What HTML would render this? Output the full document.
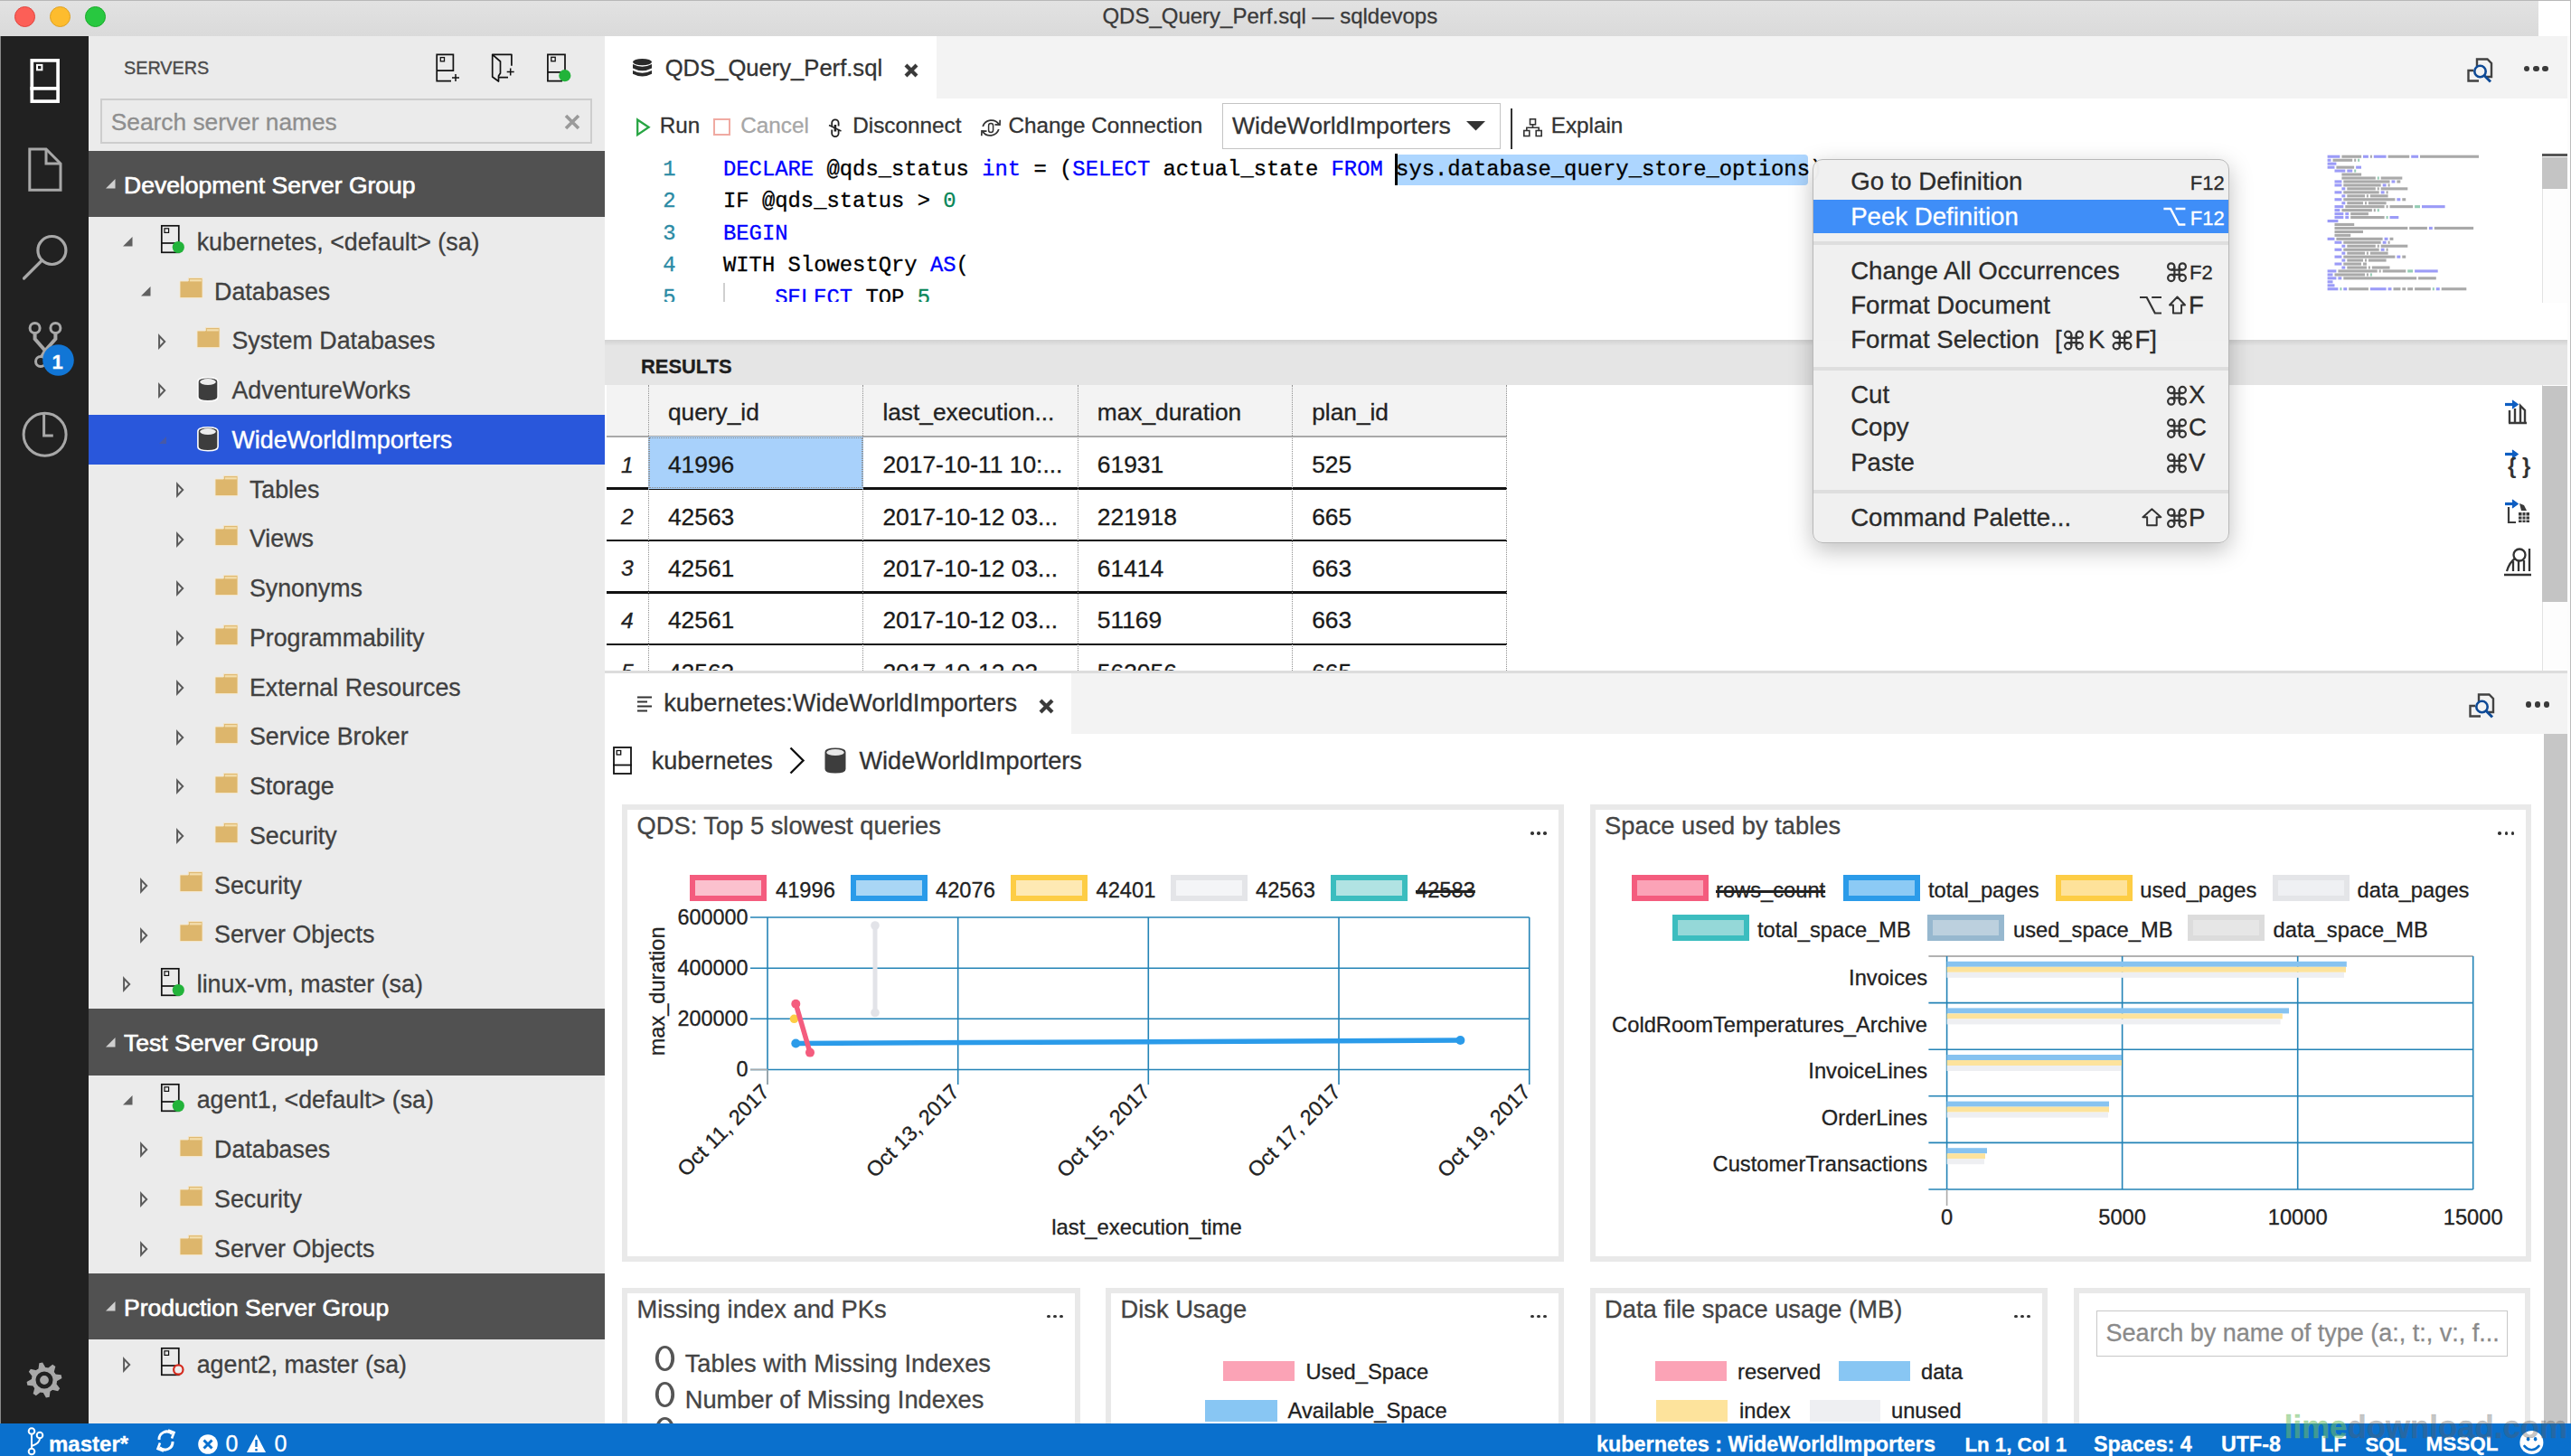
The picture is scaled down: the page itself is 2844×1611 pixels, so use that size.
<!DOCTYPE html>
<html><head><meta charset="utf-8">
<style>
*{margin:0;padding:0;box-sizing:border-box}
html,body{width:2844px;height:1611px;overflow:hidden;background:#fff;font-family:"Liberation Sans",sans-serif;color:#333}
.a{position:absolute}
.t{position:absolute;white-space:nowrap;line-height:1;-webkit-text-stroke-width:0.3px}
.mono{font-family:"Liberation Mono",monospace}
svg{position:absolute;overflow:visible}
</style></head><body>
<div class="a" style="left:0.00px;top:0.00px;width:2844.00px;height:40.00px;background:linear-gradient(#e2e2e2,#dadada);border-top:1px solid #b8b8b8"></div>
<div class="a" style="left:2808.00px;top:1.00px;width:35.00px;height:41.00px;background:#fff;"></div>
<div class="a" style="left:15.90px;top:7.00px;width:23.00px;height:23.00px;background:#fc5f57;border-radius:50%;border:1px solid #e0443e"></div>
<div class="a" style="left:54.80px;top:7.00px;width:23.00px;height:23.00px;background:#fdbc2e;border-radius:50%;border:1px solid #dea123"></div>
<div class="a" style="left:93.80px;top:7.00px;width:23.00px;height:23.00px;background:#28c840;border-radius:50%;border:1px solid #1aab29"></div>
<div class="t" style="left:1219.40px;top:6.08px;font-size:24px;color:#3a3a3a;font-weight:normal;font-family:'Liberation Sans';">QDS_Query_Perf.sql — sqldevops</div>
<div class="a" style="left:0.00px;top:40.00px;width:98.00px;height:1535.00px;background:#212121;border-left:1px solid #8a8a8a"></div>
<div class="a" style="left:98.00px;top:40.00px;width:571.00px;height:1535.00px;background:#ebebeb;"></div>
<div class="a" style="left:669.00px;top:40.00px;width:2171.00px;height:69.00px;background:#f3f3f3;"></div>
<div class="a" style="left:669.00px;top:40.00px;width:367.00px;height:69.00px;background:#fff;"></div>
<div class="a" style="left:669.00px;top:109.00px;width:2171.00px;height:267.00px;background:#fff;"></div>
<div class="a" style="left:669.00px;top:376.00px;width:2171.00px;height:6.00px;background:linear-gradient(#d2d2d2,#e2e2e2);"></div>
<div class="a" style="left:669.00px;top:382.00px;width:2171.00px;height:44.00px;background:#e5e5e5;"></div>
<div class="a" style="left:669.00px;top:426.00px;width:2143.00px;height:316.00px;background:#fff;"></div>
<div class="a" style="left:669.00px;top:742.00px;width:2171.00px;height:3.00px;background:#dcdcdc;"></div>
<div class="a" style="left:669.00px;top:745.00px;width:2171.00px;height:67.00px;background:#f3f3f3;"></div>
<div class="a" style="left:669.00px;top:745.00px;width:516.00px;height:67.00px;background:#fff;"></div>
<div class="a" style="left:669.00px;top:812.00px;width:2145.00px;height:763.00px;background:#fff;"></div>
<div class="a" style="left:2814.00px;top:812.00px;width:26.00px;height:763.00px;background:#c6c6c6;"></div>
<div class="a" style="left:2840.00px;top:40.00px;width:3.00px;height:1535.00px;background:#fcfcfc;"></div>
<div class="a" style="left:2843.00px;top:0.00px;width:1.00px;height:1611.00px;background:#bdbdbd;"></div>
<svg style="left:0.00px;top:0.00px;" width="98" height="130" viewBox="0 0 98 130"><rect x="35.3" y="66.9" width="28.8" height="45.2" fill="none" stroke="#fff" stroke-width="3.7"/><line x1="33.4" y1="97.9" x2="65.9" y2="97.9" stroke="#fff" stroke-width="3.7"/><rect x="41" y="71.9" width="5.4" height="5.4" fill="none" stroke="#fff" stroke-width="2"/></svg>
<svg style="left:0.00px;top:0.00px;" width="98" height="230" viewBox="0 0 98 230"><path d="M32.8 165 H51 L67 181 V210.3 H32.8 Z" fill="none" stroke="#a8a8a8" stroke-width="3"/><path d="M51 165 V181 H67" fill="none" stroke="#a8a8a8" stroke-width="3"/></svg>
<svg style="left:0.00px;top:0.00px;" width="98" height="330" viewBox="0 0 98 330"><circle cx="57.4" cy="277" r="15.5" fill="none" stroke="#a8a8a8" stroke-width="3.2"/><line x1="46.5" y1="288" x2="26.5" y2="308" stroke="#a8a8a8" stroke-width="3.2" stroke-linecap="round"/></svg>
<svg style="left:0.00px;top:0.00px;" width="98" height="430" viewBox="0 0 98 430"><circle cx="38.6" cy="363" r="5.5" fill="none" stroke="#a8a8a8" stroke-width="3"/><circle cx="61.4" cy="363" r="5.5" fill="none" stroke="#a8a8a8" stroke-width="3"/><circle cx="45" cy="400" r="5.5" fill="none" stroke="#a8a8a8" stroke-width="3"/><path d="M38.6 368.5 V375 L50 388 L61.4 375 V368.5" fill="none" stroke="#a8a8a8" stroke-width="4"/><line x1="50" y1="388" x2="46" y2="395" stroke="#a8a8a8" stroke-width="4"/><circle cx="64.5" cy="398.5" r="17.3" fill="#1176d6"/></svg>
<div class="t" style="left:57.60px;top:389.88px;font-size:22px;color:#fff;font-weight:bold;font-family:'Liberation Sans';">1</div>
<svg style="left:0.00px;top:0.00px;" width="98" height="510" viewBox="0 0 98 510"><circle cx="49.6" cy="480.7" r="23.5" fill="none" stroke="#a8a8a8" stroke-width="3"/><path d="M48.6 458.5 V482 H58.8" fill="none" stroke="#a8a8a8" stroke-width="3"/></svg>
<svg style="left:0.00px;top:0.00px;" width="98" height="1560" viewBox="0 0 98 1560"><polygon points="43.34,1508.34 47.09,1507.59 50.35,1513.27 53.01,1513.79 58.19,1509.80 61.37,1511.93 59.67,1518.25 61.17,1520.49 67.66,1521.34 68.41,1525.09 62.73,1528.35 62.21,1531.01 66.20,1536.19 64.07,1539.37 57.75,1537.67 55.51,1539.17 54.66,1545.66 50.91,1546.41 47.65,1540.73 44.99,1540.21 39.81,1544.20 36.63,1542.07 38.33,1535.75 36.83,1533.51 30.34,1532.66 29.59,1528.91 35.27,1525.65 35.79,1522.99 31.80,1517.81 33.93,1514.63 40.25,1516.33 42.49,1514.83" fill="#a8a8a8"/><circle cx="49" cy="1527" r="14" fill="#a8a8a8"/><circle cx="49" cy="1527" r="7.2" fill="none" stroke="#212121" stroke-width="4.6"/></svg>
<div class="t" style="left:137.00px;top:66.24px;font-size:19.8px;color:#4a4a4a;font-weight:normal;font-family:'Liberation Sans';-webkit-text-stroke:0.35px #4a4a4a">SERVERS</div>
<div class="a" style="left:111.00px;top:109.00px;width:544.00px;height:50.00px;background:transparent;border:2px solid #cdcdcd"></div>
<div class="t" style="left:122.80px;top:121.74px;font-size:26.3px;color:#8e8e8e;font-weight:normal;font-family:'Liberation Sans';">Search server names</div>
<svg style="left:624.00px;top:126.00px;" width="18" height="18" viewBox="0 0 18 18"><path d="M2 2 L16 16 M16 2 L2 16" stroke="#9a9a9a" stroke-width="3.6"/></svg>
<div class="a" style="left:98.00px;top:166.80px;width:571.00px;height:73.50px;background:#515151;"></div>
<svg style="left:116.50px;top:198.00px;" width="11" height="11" viewBox="0 0 11 11"><path d="M0 10.5 H10.5 V0 Z" fill="#cfcfcf"/></svg>
<div class="t" style="left:137.00px;top:191.57px;font-size:26.5px;color:#ffffff;font-weight:normal;font-family:'Liberation Sans';-webkit-text-stroke:0.7px #fff">Development Server Group</div>
<svg style="left:136.20px;top:262.18px;" width="11" height="11" viewBox="0 0 11 11"><path d="M0 10.5 H10.5 V0 Z" fill="#606060"/></svg>
<svg style="left:178.40px;top:249.30px;" width="26" height="32" viewBox="0 0 26 32"><rect x="0.8" y="0.8" width="19" height="29.5" fill="none" stroke="#111" stroke-width="1.7"/><line x1="0" y1="20" x2="20" y2="20" stroke="#111" stroke-width="1.7"/><rect x="4" y="3.8" width="4.6" height="4.6" fill="none" stroke="#111" stroke-width="1.2"/><circle cx="19.3" cy="24.5" r="6.6" fill="#22b33a"/></svg>
<div class="t" style="left:217.70px;top:254.81px;font-size:26.8px;color:#404040;font-weight:normal;font-family:'Liberation Sans';">kubernetes, &lt;default&gt; (sa)</div>
<svg style="left:155.80px;top:316.93px;" width="11" height="11" viewBox="0 0 11 11"><path d="M0 10.5 H10.5 V0 Z" fill="#606060"/></svg>
<svg style="left:199.00px;top:307.25px;" width="26" height="24" viewBox="0 0 26 24"><path d="M9.3 0.6 H25 V22.6 H0 V4 H9.3 Z" fill="#ddb66c" stroke="#f6ead0" stroke-width="0.9"/><rect x="10.8" y="2.2" width="13" height="2.2" fill="#f4dfae"/></svg>
<div class="t" style="left:237.10px;top:309.56px;font-size:26.8px;color:#404040;font-weight:normal;font-family:'Liberation Sans';">Databases</div>
<svg style="left:174.90px;top:369.68px;" width="9" height="16" viewBox="0 0 9 16"><path d="M1.1 1.6 L7.2 8 L1.1 14.4 Z" fill="none" stroke="#5a5a5a" stroke-width="2" stroke-linejoin="miter"/></svg>
<svg style="left:218.40px;top:362.00px;" width="26" height="24" viewBox="0 0 26 24"><path d="M9.3 0.6 H25 V22.6 H0 V4 H9.3 Z" fill="#ddb66c" stroke="#f6ead0" stroke-width="0.9"/><rect x="10.8" y="2.2" width="13" height="2.2" fill="#f4dfae"/></svg>
<div class="t" style="left:256.50px;top:364.31px;font-size:26.8px;color:#404040;font-weight:normal;font-family:'Liberation Sans';">System Databases</div>
<svg style="left:174.90px;top:424.43px;" width="9" height="16" viewBox="0 0 9 16"><path d="M1.1 1.6 L7.2 8 L1.1 14.4 Z" fill="none" stroke="#5a5a5a" stroke-width="2" stroke-linejoin="miter"/></svg>
<svg style="left:218.20px;top:417.15px;" width="25" height="28" viewBox="0 0 25 28"><path d="M0.9 5.2 Q0.9 0.8 12 0.8 Q23.1 0.8 23.1 5.2 V22.3 Q23.1 26.7 12 26.7 Q0.9 26.7 0.9 22.3 Z" fill="#3d3d3d" stroke="#fff" stroke-width="1.6"/><ellipse cx="12" cy="5.6" rx="8.9" ry="3.5" fill="#ececec"/></svg>
<div class="t" style="left:256.50px;top:419.06px;font-size:26.8px;color:#404040;font-weight:normal;font-family:'Liberation Sans';">AdventureWorks</div>
<div class="a" style="left:98.00px;top:459.30px;width:571.00px;height:54.75px;background:#2957db;"></div>
<svg style="left:176.40px;top:482.68px;" width="9" height="9" viewBox="0 0 9 9"><path d="M0 8 H8 V0 Z" fill="#4d5a9a" opacity="0.8"/></svg>
<svg style="left:218.20px;top:471.90px;" width="25" height="28" viewBox="0 0 25 28"><path d="M0.9 5.2 Q0.9 0.8 12 0.8 Q23.1 0.8 23.1 5.2 V22.3 Q23.1 26.7 12 26.7 Q0.9 26.7 0.9 22.3 Z" fill="#3d3d3d" stroke="#fff" stroke-width="1.6"/><ellipse cx="12" cy="5.6" rx="8.9" ry="3.5" fill="#ececec"/></svg>
<div class="t" style="left:256.50px;top:473.81px;font-size:26.8px;color:#ffffff;font-weight:normal;font-family:'Liberation Sans';-webkit-text-stroke:0.45px #fff">WideWorldImporters</div>
<svg style="left:194.50px;top:533.92px;" width="9" height="16" viewBox="0 0 9 16"><path d="M1.1 1.6 L7.2 8 L1.1 14.4 Z" fill="none" stroke="#5a5a5a" stroke-width="2" stroke-linejoin="miter"/></svg>
<svg style="left:237.80px;top:526.25px;" width="26" height="24" viewBox="0 0 26 24"><path d="M9.3 0.6 H25 V22.6 H0 V4 H9.3 Z" fill="#ddb66c" stroke="#f6ead0" stroke-width="0.9"/><rect x="10.8" y="2.2" width="13" height="2.2" fill="#f4dfae"/></svg>
<div class="t" style="left:275.90px;top:528.56px;font-size:26.8px;color:#404040;font-weight:normal;font-family:'Liberation Sans';">Tables</div>
<svg style="left:194.50px;top:588.67px;" width="9" height="16" viewBox="0 0 9 16"><path d="M1.1 1.6 L7.2 8 L1.1 14.4 Z" fill="none" stroke="#5a5a5a" stroke-width="2" stroke-linejoin="miter"/></svg>
<svg style="left:237.80px;top:581.00px;" width="26" height="24" viewBox="0 0 26 24"><path d="M9.3 0.6 H25 V22.6 H0 V4 H9.3 Z" fill="#ddb66c" stroke="#f6ead0" stroke-width="0.9"/><rect x="10.8" y="2.2" width="13" height="2.2" fill="#f4dfae"/></svg>
<div class="t" style="left:275.90px;top:583.31px;font-size:26.8px;color:#404040;font-weight:normal;font-family:'Liberation Sans';">Views</div>
<svg style="left:194.50px;top:643.42px;" width="9" height="16" viewBox="0 0 9 16"><path d="M1.1 1.6 L7.2 8 L1.1 14.4 Z" fill="none" stroke="#5a5a5a" stroke-width="2" stroke-linejoin="miter"/></svg>
<svg style="left:237.80px;top:635.75px;" width="26" height="24" viewBox="0 0 26 24"><path d="M9.3 0.6 H25 V22.6 H0 V4 H9.3 Z" fill="#ddb66c" stroke="#f6ead0" stroke-width="0.9"/><rect x="10.8" y="2.2" width="13" height="2.2" fill="#f4dfae"/></svg>
<div class="t" style="left:275.90px;top:638.06px;font-size:26.8px;color:#404040;font-weight:normal;font-family:'Liberation Sans';">Synonyms</div>
<svg style="left:194.50px;top:698.17px;" width="9" height="16" viewBox="0 0 9 16"><path d="M1.1 1.6 L7.2 8 L1.1 14.4 Z" fill="none" stroke="#5a5a5a" stroke-width="2" stroke-linejoin="miter"/></svg>
<svg style="left:237.80px;top:690.50px;" width="26" height="24" viewBox="0 0 26 24"><path d="M9.3 0.6 H25 V22.6 H0 V4 H9.3 Z" fill="#ddb66c" stroke="#f6ead0" stroke-width="0.9"/><rect x="10.8" y="2.2" width="13" height="2.2" fill="#f4dfae"/></svg>
<div class="t" style="left:275.90px;top:692.81px;font-size:26.8px;color:#404040;font-weight:normal;font-family:'Liberation Sans';">Programmability</div>
<svg style="left:194.50px;top:752.92px;" width="9" height="16" viewBox="0 0 9 16"><path d="M1.1 1.6 L7.2 8 L1.1 14.4 Z" fill="none" stroke="#5a5a5a" stroke-width="2" stroke-linejoin="miter"/></svg>
<svg style="left:237.80px;top:745.25px;" width="26" height="24" viewBox="0 0 26 24"><path d="M9.3 0.6 H25 V22.6 H0 V4 H9.3 Z" fill="#ddb66c" stroke="#f6ead0" stroke-width="0.9"/><rect x="10.8" y="2.2" width="13" height="2.2" fill="#f4dfae"/></svg>
<div class="t" style="left:275.90px;top:747.56px;font-size:26.8px;color:#404040;font-weight:normal;font-family:'Liberation Sans';">External Resources</div>
<svg style="left:194.50px;top:807.67px;" width="9" height="16" viewBox="0 0 9 16"><path d="M1.1 1.6 L7.2 8 L1.1 14.4 Z" fill="none" stroke="#5a5a5a" stroke-width="2" stroke-linejoin="miter"/></svg>
<svg style="left:237.80px;top:800.00px;" width="26" height="24" viewBox="0 0 26 24"><path d="M9.3 0.6 H25 V22.6 H0 V4 H9.3 Z" fill="#ddb66c" stroke="#f6ead0" stroke-width="0.9"/><rect x="10.8" y="2.2" width="13" height="2.2" fill="#f4dfae"/></svg>
<div class="t" style="left:275.90px;top:802.31px;font-size:26.8px;color:#404040;font-weight:normal;font-family:'Liberation Sans';">Service Broker</div>
<svg style="left:194.50px;top:862.42px;" width="9" height="16" viewBox="0 0 9 16"><path d="M1.1 1.6 L7.2 8 L1.1 14.4 Z" fill="none" stroke="#5a5a5a" stroke-width="2" stroke-linejoin="miter"/></svg>
<svg style="left:237.80px;top:854.75px;" width="26" height="24" viewBox="0 0 26 24"><path d="M9.3 0.6 H25 V22.6 H0 V4 H9.3 Z" fill="#ddb66c" stroke="#f6ead0" stroke-width="0.9"/><rect x="10.8" y="2.2" width="13" height="2.2" fill="#f4dfae"/></svg>
<div class="t" style="left:275.90px;top:857.06px;font-size:26.8px;color:#404040;font-weight:normal;font-family:'Liberation Sans';">Storage</div>
<svg style="left:194.50px;top:917.17px;" width="9" height="16" viewBox="0 0 9 16"><path d="M1.1 1.6 L7.2 8 L1.1 14.4 Z" fill="none" stroke="#5a5a5a" stroke-width="2" stroke-linejoin="miter"/></svg>
<svg style="left:237.80px;top:909.50px;" width="26" height="24" viewBox="0 0 26 24"><path d="M9.3 0.6 H25 V22.6 H0 V4 H9.3 Z" fill="#ddb66c" stroke="#f6ead0" stroke-width="0.9"/><rect x="10.8" y="2.2" width="13" height="2.2" fill="#f4dfae"/></svg>
<div class="t" style="left:275.90px;top:911.81px;font-size:26.8px;color:#404040;font-weight:normal;font-family:'Liberation Sans';">Security</div>
<svg style="left:155.30px;top:971.92px;" width="9" height="16" viewBox="0 0 9 16"><path d="M1.1 1.6 L7.2 8 L1.1 14.4 Z" fill="none" stroke="#5a5a5a" stroke-width="2" stroke-linejoin="miter"/></svg>
<svg style="left:199.00px;top:964.25px;" width="26" height="24" viewBox="0 0 26 24"><path d="M9.3 0.6 H25 V22.6 H0 V4 H9.3 Z" fill="#ddb66c" stroke="#f6ead0" stroke-width="0.9"/><rect x="10.8" y="2.2" width="13" height="2.2" fill="#f4dfae"/></svg>
<div class="t" style="left:237.10px;top:966.56px;font-size:26.8px;color:#404040;font-weight:normal;font-family:'Liberation Sans';">Security</div>
<svg style="left:155.30px;top:1026.67px;" width="9" height="16" viewBox="0 0 9 16"><path d="M1.1 1.6 L7.2 8 L1.1 14.4 Z" fill="none" stroke="#5a5a5a" stroke-width="2" stroke-linejoin="miter"/></svg>
<svg style="left:199.00px;top:1019.00px;" width="26" height="24" viewBox="0 0 26 24"><path d="M9.3 0.6 H25 V22.6 H0 V4 H9.3 Z" fill="#ddb66c" stroke="#f6ead0" stroke-width="0.9"/><rect x="10.8" y="2.2" width="13" height="2.2" fill="#f4dfae"/></svg>
<div class="t" style="left:237.10px;top:1021.31px;font-size:26.8px;color:#404040;font-weight:normal;font-family:'Liberation Sans';">Server Objects</div>
<svg style="left:135.70px;top:1081.42px;" width="9" height="16" viewBox="0 0 9 16"><path d="M1.1 1.6 L7.2 8 L1.1 14.4 Z" fill="none" stroke="#5a5a5a" stroke-width="2" stroke-linejoin="miter"/></svg>
<svg style="left:178.40px;top:1070.55px;" width="26" height="32" viewBox="0 0 26 32"><rect x="0.8" y="0.8" width="19" height="29.5" fill="none" stroke="#111" stroke-width="1.7"/><line x1="0" y1="20" x2="20" y2="20" stroke="#111" stroke-width="1.7"/><rect x="4" y="3.8" width="4.6" height="4.6" fill="none" stroke="#111" stroke-width="1.2"/><circle cx="19.3" cy="24.5" r="6.6" fill="#22b33a"/></svg>
<div class="t" style="left:217.70px;top:1076.06px;font-size:26.8px;color:#404040;font-weight:normal;font-family:'Liberation Sans';">linux-vm, master (sa)</div>
<div class="a" style="left:98.00px;top:1116.30px;width:571.00px;height:73.50px;background:#515151;"></div>
<svg style="left:116.50px;top:1147.50px;" width="11" height="11" viewBox="0 0 11 11"><path d="M0 10.5 H10.5 V0 Z" fill="#cfcfcf"/></svg>
<div class="t" style="left:137.00px;top:1141.07px;font-size:26.5px;color:#ffffff;font-weight:normal;font-family:'Liberation Sans';-webkit-text-stroke:0.7px #fff">Test Server Group</div>
<svg style="left:136.20px;top:1211.67px;" width="11" height="11" viewBox="0 0 11 11"><path d="M0 10.5 H10.5 V0 Z" fill="#606060"/></svg>
<svg style="left:178.40px;top:1198.80px;" width="26" height="32" viewBox="0 0 26 32"><rect x="0.8" y="0.8" width="19" height="29.5" fill="none" stroke="#111" stroke-width="1.7"/><line x1="0" y1="20" x2="20" y2="20" stroke="#111" stroke-width="1.7"/><rect x="4" y="3.8" width="4.6" height="4.6" fill="none" stroke="#111" stroke-width="1.2"/><circle cx="19.3" cy="24.5" r="6.6" fill="#22b33a"/></svg>
<div class="t" style="left:217.70px;top:1204.31px;font-size:26.8px;color:#404040;font-weight:normal;font-family:'Liberation Sans';">agent1, &lt;default&gt; (sa)</div>
<svg style="left:155.30px;top:1264.42px;" width="9" height="16" viewBox="0 0 9 16"><path d="M1.1 1.6 L7.2 8 L1.1 14.4 Z" fill="none" stroke="#5a5a5a" stroke-width="2" stroke-linejoin="miter"/></svg>
<svg style="left:199.00px;top:1256.75px;" width="26" height="24" viewBox="0 0 26 24"><path d="M9.3 0.6 H25 V22.6 H0 V4 H9.3 Z" fill="#ddb66c" stroke="#f6ead0" stroke-width="0.9"/><rect x="10.8" y="2.2" width="13" height="2.2" fill="#f4dfae"/></svg>
<div class="t" style="left:237.10px;top:1259.06px;font-size:26.8px;color:#404040;font-weight:normal;font-family:'Liberation Sans';">Databases</div>
<svg style="left:155.30px;top:1319.17px;" width="9" height="16" viewBox="0 0 9 16"><path d="M1.1 1.6 L7.2 8 L1.1 14.4 Z" fill="none" stroke="#5a5a5a" stroke-width="2" stroke-linejoin="miter"/></svg>
<svg style="left:199.00px;top:1311.50px;" width="26" height="24" viewBox="0 0 26 24"><path d="M9.3 0.6 H25 V22.6 H0 V4 H9.3 Z" fill="#ddb66c" stroke="#f6ead0" stroke-width="0.9"/><rect x="10.8" y="2.2" width="13" height="2.2" fill="#f4dfae"/></svg>
<div class="t" style="left:237.10px;top:1313.81px;font-size:26.8px;color:#404040;font-weight:normal;font-family:'Liberation Sans';">Security</div>
<svg style="left:155.30px;top:1373.92px;" width="9" height="16" viewBox="0 0 9 16"><path d="M1.1 1.6 L7.2 8 L1.1 14.4 Z" fill="none" stroke="#5a5a5a" stroke-width="2" stroke-linejoin="miter"/></svg>
<svg style="left:199.00px;top:1366.25px;" width="26" height="24" viewBox="0 0 26 24"><path d="M9.3 0.6 H25 V22.6 H0 V4 H9.3 Z" fill="#ddb66c" stroke="#f6ead0" stroke-width="0.9"/><rect x="10.8" y="2.2" width="13" height="2.2" fill="#f4dfae"/></svg>
<div class="t" style="left:237.10px;top:1368.56px;font-size:26.8px;color:#404040;font-weight:normal;font-family:'Liberation Sans';">Server Objects</div>
<div class="a" style="left:98.00px;top:1408.80px;width:571.00px;height:73.50px;background:#515151;"></div>
<svg style="left:116.50px;top:1440.00px;" width="11" height="11" viewBox="0 0 11 11"><path d="M0 10.5 H10.5 V0 Z" fill="#cfcfcf"/></svg>
<div class="t" style="left:137.00px;top:1433.57px;font-size:26.5px;color:#ffffff;font-weight:normal;font-family:'Liberation Sans';-webkit-text-stroke:0.7px #fff">Production Server Group</div>
<svg style="left:135.70px;top:1502.17px;" width="9" height="16" viewBox="0 0 9 16"><path d="M1.1 1.6 L7.2 8 L1.1 14.4 Z" fill="none" stroke="#5a5a5a" stroke-width="2" stroke-linejoin="miter"/></svg>
<svg style="left:178.40px;top:1491.30px;" width="26" height="32" viewBox="0 0 26 32"><rect x="0.8" y="0.8" width="19" height="29.5" fill="none" stroke="#111" stroke-width="1.7"/><line x1="0" y1="20" x2="20" y2="20" stroke="#111" stroke-width="1.7"/><rect x="4" y="3.8" width="4.6" height="4.6" fill="none" stroke="#111" stroke-width="1.2"/><circle cx="19.3" cy="24.5" r="5.2" fill="#eee" stroke="#d52b1e" stroke-width="2.2"/></svg>
<div class="t" style="left:217.70px;top:1496.81px;font-size:26.8px;color:#404040;font-weight:normal;font-family:'Liberation Sans';">agent2, master (sa)</div>
<svg style="left:0.00px;top:0.00px;" width="669" height="100" viewBox="0 0 669 100"><path d="M499 89.7 H483.2 V60.3 H501.4 V79 M483.2 78.1 H501.4" fill="none" stroke="#111" stroke-width="1.7"/><rect x="487.3" y="63.6" width="4.2" height="4.2" fill="none" stroke="#111" stroke-width="1.3"/><path d="M500 86 H508 M504 82 V90" stroke="#111" stroke-width="1.5"/><path d="M565.9 72.8 V60.3 H544.7 V85 L551.5 90 V84 L553.5 81 V68 L544.7 60.3 M552 85.7 H562" fill="none" stroke="#111" stroke-width="1.7" stroke-linejoin="round"/><path d="M560.7 79.6 H568.7 M564.7 75.6 V83.6" stroke="#111" stroke-width="1.5"/><path d="M625 79 V60.3 H605.9 V89.7 H622 M605.9 79.8 H622" fill="none" stroke="#111" stroke-width="1.7"/><rect x="609.8" y="63.3" width="4.4" height="4.4" fill="none" stroke="#111" stroke-width="1.3"/><circle cx="624.8" cy="83.7" r="6.6" fill="#22b33a"/></svg>
<svg style="left:699.60px;top:65.00px;" width="22" height="22" viewBox="0 0 22 22"><ellipse cx="10.5" cy="3.6" rx="10.5" ry="3.6" fill="#2a2a2a"/><path d="M0 6 Q10.5 11.5 21 6 V10.5 Q10.5 16 0 10.5 Z" fill="#2a2a2a"/><path d="M0 13 Q10.5 18.5 21 13 V16.8 Q10.5 22.3 0 16.8 Z" fill="#2a2a2a"/></svg>
<div class="t" style="left:735.70px;top:62.63px;font-size:25.6px;color:#333;font-weight:normal;font-family:'Liberation Sans';">QDS_Query_Perf.sql</div>
<svg style="left:1000.00px;top:69.60px;" width="16" height="16" viewBox="0 0 16 16"><path d="M2 2 L14 14 M14 2 L2 14" stroke="#3a3a3a" stroke-width="4.2"/></svg>
<svg style="left:2729.00px;top:63.50px;" width="28" height="28" viewBox="0 0 28 28"><path d="M11 9 V1.5 H22.5 L27 6 V21 H21" fill="none" stroke="#424242" stroke-width="2.4"/><path d="M7 14 H1.5 V25.5 H13" fill="none" stroke="#424242" stroke-width="2.4"/><circle cx="14.5" cy="15" r="6.2" fill="none" stroke="#0e4a96" stroke-width="2.6"/><line x1="19" y1="19.5" x2="26" y2="26.5" stroke="#0e4a96" stroke-width="3"/></svg>
<div class="a" style="left:2792.10px;top:72.60px;width:6.40px;height:6.40px;background:#3a3a3a;border-radius:50%"></div>
<div class="a" style="left:2802.20px;top:72.60px;width:6.40px;height:6.40px;background:#3a3a3a;border-radius:50%"></div>
<div class="a" style="left:2812.30px;top:72.60px;width:6.40px;height:6.40px;background:#3a3a3a;border-radius:50%"></div>
<svg style="left:703.50px;top:131.20px;" width="16" height="20" viewBox="0 0 16 20"><path d="M1.2 1.5 L13.6 9.8 L1.2 18.2 Z" fill="none" stroke="#27a543" stroke-width="2.3" stroke-linejoin="miter"/></svg>
<div class="t" style="left:729.70px;top:127.43px;font-size:24.3px;color:#333;font-weight:normal;font-family:'Liberation Sans';">Run</div>
<div class="a" style="left:789.00px;top:131.00px;width:19.00px;height:19.00px;background:transparent;border:2.2px solid #f0aaa2"></div>
<div class="t" style="left:819.30px;top:127.43px;font-size:24.3px;color:#a6a6a6;font-weight:normal;font-family:'Liberation Sans';">Cancel</div>
<svg style="left:916.60px;top:130.50px;" width="15" height="21" viewBox="0 0 15 21"><path d="M3.2 9 V5 A3.7 3.7 0 0 1 10.6 5 V8.5" fill="none" stroke="#222" stroke-width="1.8"/><path d="M3.2 12.5 V16.5 A3.7 3.7 0 0 0 10.6 16.5 V12.5" fill="none" stroke="#222" stroke-width="1.8"/><line x1="0" y1="7.5" x2="13.5" y2="14" stroke="#222" stroke-width="1.4"/><line x1="6.9" y1="7" x2="6.9" y2="14.5" stroke="#222" stroke-width="2.6"/></svg>
<div class="t" style="left:943.20px;top:127.43px;font-size:24.3px;color:#333;font-weight:normal;font-family:'Liberation Sans';">Disconnect</div>
<svg style="left:1084.70px;top:130.60px;" width="23" height="21" viewBox="0 0 23 21"><path d="M2.2 9 A10 10 0 0 1 20 6.5" fill="none" stroke="#333" stroke-width="1.8"/><path d="M19.8 12 A10 10 0 0 1 2 14.5" fill="none" stroke="#333" stroke-width="1.8"/><path d="M15.5 6.8 L21 7.2 L21.2 1.8" fill="none" stroke="#333" stroke-width="1.7"/><path d="M6.5 14.2 L1 13.8 L0.8 19.2" fill="none" stroke="#333" stroke-width="1.7"/><rect x="8.6" y="5.5" width="5" height="10" rx="2.5" fill="none" stroke="#333" stroke-width="1.5"/></svg>
<div class="t" style="left:1115.40px;top:127.43px;font-size:24.3px;color:#333;font-weight:normal;font-family:'Liberation Sans';">Change Connection</div>
<div class="a" style="left:1352.00px;top:114.00px;width:308.00px;height:51.00px;background:#fff;border:1.6px solid #c4c4c4"></div>
<div class="t" style="left:1363.00px;top:126.38px;font-size:26.6px;color:#333;font-weight:normal;font-family:'Liberation Sans';">WideWorldImporters</div>
<svg style="left:1622.00px;top:134.00px;" width="24" height="12" viewBox="0 0 24 12"><path d="M0 0 H21 L10.5 10.5 Z" fill="#333"/></svg>
<div class="a" style="left:1670.50px;top:120.00px;width:2.00px;height:45.00px;background:#333;"></div>
<svg style="left:1685.00px;top:131.00px;" width="22" height="21" viewBox="0 0 22 21"><rect x="7.5" y="0.8" width="6" height="6" fill="none" stroke="#333" stroke-width="1.6"/><rect x="0.8" y="13.5" width="6" height="6" fill="none" stroke="#333" stroke-width="1.6"/><rect x="14.2" y="13.5" width="6" height="6" fill="none" stroke="#333" stroke-width="1.6"/><path d="M10.5 6.8 V10.2 M3.8 13.5 V10.2 H17.2 V13.5" fill="none" stroke="#333" stroke-width="1.6"/></svg>
<div class="t" style="left:1715.70px;top:127.43px;font-size:24.3px;color:#333;font-weight:normal;font-family:'Liberation Sans';">Explain</div>
<div class="a" style="left:1544.00px;top:170.70px;width:456.00px;height:34.00px;background:#add6ff;border-radius:4px"></div>
<div class="a" style="left:669px;top:165px;width:1900px;height:169px;overflow:hidden"><div class="a" style="left:-669px;top:-165px;width:2844px;height:400px"><div class="t" style="left:747.50px;top:175.52px;font-size:23.85px;color:#2b8ba5;font-weight:normal;font-family:'Liberation Mono';transform:translateX(-100%)">1</div>
<div class="t" style="left:800.00px;top:175.52px;font-size:23.85px;color:#000;font-weight:normal;font-family:'Liberation Mono';"><span style="color:#0000ff">DECLARE</span><span style="color:#000000">&nbsp;@qds_status&nbsp;</span><span style="color:#0000ff">int</span><span style="color:#000000">&nbsp;=&nbsp;(</span><span style="color:#0000ff">SELECT</span><span style="color:#000000">&nbsp;actual_state&nbsp;</span><span style="color:#0000ff">FROM</span><span style="color:#000000">&nbsp;sys.database_query_store_options)</span></div>
<div class="t" style="left:747.50px;top:211.02px;font-size:23.85px;color:#2b8ba5;font-weight:normal;font-family:'Liberation Mono';transform:translateX(-100%)">2</div>
<div class="t" style="left:800.00px;top:211.02px;font-size:23.85px;color:#000;font-weight:normal;font-family:'Liberation Mono';"><span style="color:#000000">IF&nbsp;@qds_status&nbsp;>&nbsp;</span><span style="color:#098658">0</span></div>
<div class="t" style="left:747.50px;top:246.52px;font-size:23.85px;color:#2b8ba5;font-weight:normal;font-family:'Liberation Mono';transform:translateX(-100%)">3</div>
<div class="t" style="left:800.00px;top:246.52px;font-size:23.85px;color:#000;font-weight:normal;font-family:'Liberation Mono';"><span style="color:#0000ff">BEGIN</span></div>
<div class="t" style="left:747.50px;top:282.02px;font-size:23.85px;color:#2b8ba5;font-weight:normal;font-family:'Liberation Mono';transform:translateX(-100%)">4</div>
<div class="t" style="left:800.00px;top:282.02px;font-size:23.85px;color:#000;font-weight:normal;font-family:'Liberation Mono';"><span style="color:#000000">WITH&nbsp;SlowestQry&nbsp;</span><span style="color:#0000ff">AS</span><span style="color:#000000">(</span></div>
<div class="t" style="left:747.50px;top:317.52px;font-size:23.85px;color:#2b8ba5;font-weight:normal;font-family:'Liberation Mono';transform:translateX(-100%)">5</div>
<div class="t" style="left:800.00px;top:317.52px;font-size:23.85px;color:#000;font-weight:normal;font-family:'Liberation Mono';"><span style="color:#000000">&nbsp;&nbsp;&nbsp;&nbsp;</span><span style="color:#0000ff">SELECT</span><span style="color:#000000">&nbsp;TOP&nbsp;</span><span style="color:#098658">5</span></div><div class="a" style="left:800.00px;top:313.00px;width:1.50px;height:25.00px;background:#d0d0d0;"></div></div></div>
<div class="a" style="left:1543.00px;top:170.00px;width:3.00px;height:35.00px;background:#000;"></div>
<svg style="left:2560.00px;top:160.00px;opacity:0.5" width="200" height="170" viewBox="0 0 200 170"><rect x="14.6" y="11.7" width="13.8" height="3.1" fill="#3a3af0"/><rect x="30.4" y="11.7" width="21.7" height="3.1" fill="#555555"/><rect x="54.0" y="11.7" width="5.9" height="3.1" fill="#3a3af0"/><rect x="61.9" y="11.7" width="2.0" height="3.1" fill="#555555"/><rect x="65.8" y="11.7" width="13.8" height="3.1" fill="#3a3af0"/><rect x="81.6" y="11.7" width="23.6" height="3.1" fill="#555555"/><rect x="107.2" y="11.7" width="7.9" height="3.1" fill="#3a3af0"/><rect x="117.0" y="11.7" width="65.0" height="3.1" fill="#555555"/><rect x="14.6" y="15.7" width="3.9" height="3.1" fill="#3a3af0"/><rect x="20.5" y="15.7" width="21.7" height="3.1" fill="#555555"/><rect x="44.2" y="15.7" width="2.0" height="3.1" fill="#555555"/><rect x="48.1" y="15.7" width="2.0" height="3.1" fill="#2c9a6a"/><rect x="14.6" y="19.6" width="9.8" height="3.1" fill="#3a3af0"/><rect x="14.6" y="23.6" width="7.9" height="3.1" fill="#3a3af0"/><rect x="24.4" y="23.6" width="19.7" height="3.1" fill="#555555"/><rect x="46.1" y="23.6" width="5.9" height="3.1" fill="#3a3af0"/><rect x="22.5" y="27.5" width="11.8" height="3.1" fill="#3a3af0"/><rect x="36.3" y="27.5" width="5.9" height="3.1" fill="#3a3af0"/><rect x="44.2" y="27.5" width="2.0" height="3.1" fill="#2c9a6a"/><rect x="30.4" y="31.5" width="21.7" height="3.1" fill="#555555"/><rect x="30.4" y="35.5" width="37.4" height="3.1" fill="#555555"/><rect x="69.8" y="35.5" width="2.0" height="3.1" fill="#2c9a6a"/><rect x="73.7" y="35.5" width="23.6" height="3.1" fill="#555555"/><rect x="22.5" y="39.4" width="7.9" height="3.1" fill="#3a3af0"/><rect x="32.3" y="39.4" width="51.2" height="3.1" fill="#555555"/><rect x="85.5" y="39.4" width="3.9" height="3.1" fill="#3a3af0"/><rect x="91.4" y="39.4" width="3.9" height="3.1" fill="#555555"/><rect x="22.5" y="43.4" width="7.9" height="3.1" fill="#3a3af0"/><rect x="32.3" y="43.4" width="41.4" height="3.1" fill="#555555"/><rect x="75.7" y="43.4" width="3.9" height="3.1" fill="#3a3af0"/><rect x="81.6" y="43.4" width="2.0" height="3.1" fill="#555555"/><rect x="30.4" y="47.3" width="3.9" height="3.1" fill="#3a3af0"/><rect x="36.3" y="47.3" width="31.5" height="3.1" fill="#555555"/><rect x="69.8" y="47.3" width="2.0" height="3.1" fill="#555555"/><rect x="73.7" y="47.3" width="29.6" height="3.1" fill="#555555"/><rect x="22.5" y="51.3" width="7.9" height="3.1" fill="#3a3af0"/><rect x="32.3" y="51.3" width="39.4" height="3.1" fill="#555555"/><rect x="73.7" y="51.3" width="3.9" height="3.1" fill="#3a3af0"/><rect x="79.6" y="51.3" width="2.0" height="3.1" fill="#555555"/><rect x="30.4" y="55.3" width="3.9" height="3.1" fill="#3a3af0"/><rect x="36.3" y="55.3" width="19.7" height="3.1" fill="#555555"/><rect x="57.9" y="55.3" width="2.0" height="3.1" fill="#555555"/><rect x="61.9" y="55.3" width="19.7" height="3.1" fill="#555555"/><rect x="22.5" y="59.2" width="7.9" height="3.1" fill="#3a3af0"/><rect x="32.3" y="59.2" width="57.1" height="3.1" fill="#555555"/><rect x="91.4" y="59.2" width="3.9" height="3.1" fill="#3a3af0"/><rect x="97.3" y="59.2" width="3.9" height="3.1" fill="#555555"/><rect x="30.4" y="63.2" width="3.9" height="3.1" fill="#3a3af0"/><rect x="36.3" y="63.2" width="17.7" height="3.1" fill="#555555"/><rect x="56.0" y="63.2" width="2.0" height="3.1" fill="#555555"/><rect x="59.9" y="63.2" width="19.7" height="3.1" fill="#555555"/><rect x="22.5" y="67.1" width="9.8" height="3.1" fill="#3a3af0"/><rect x="34.3" y="67.1" width="43.3" height="3.1" fill="#555555"/><rect x="79.6" y="67.1" width="2.0" height="3.1" fill="#555555"/><rect x="83.5" y="67.1" width="25.6" height="3.1" fill="#555555"/><rect x="111.1" y="67.1" width="5.9" height="3.1" fill="#2c9a6a"/><rect x="119.0" y="67.1" width="25.6" height="3.1" fill="#3a3af0"/><rect x="22.5" y="71.1" width="5.9" height="3.1" fill="#3a3af0"/><rect x="30.4" y="71.1" width="33.5" height="3.1" fill="#555555"/><rect x="65.8" y="71.1" width="2.0" height="3.1" fill="#555555"/><rect x="69.8" y="71.1" width="2.0" height="3.1" fill="#2c9a6a"/><rect x="22.5" y="75.1" width="9.8" height="3.1" fill="#3a3af0"/><rect x="34.3" y="75.1" width="3.9" height="3.1" fill="#3a3af0"/><rect x="40.2" y="75.1" width="19.7" height="3.1" fill="#555555"/><rect x="22.5" y="79.0" width="9.8" height="3.1" fill="#3a3af0"/><rect x="34.3" y="79.0" width="3.9" height="3.1" fill="#3a3af0"/><rect x="40.2" y="79.0" width="37.4" height="3.1" fill="#555555"/><rect x="79.6" y="79.0" width="2.0" height="3.1" fill="#2c9a6a"/><rect x="83.5" y="79.0" width="9.8" height="3.1" fill="#3a3af0"/><rect x="14.6" y="83.0" width="11.8" height="3.1" fill="#3a3af0"/><rect x="22.5" y="86.9" width="21.7" height="3.1" fill="#555555"/><rect x="22.5" y="90.9" width="80.8" height="3.1" fill="#555555"/><rect x="105.2" y="90.9" width="19.7" height="3.1" fill="#555555"/><rect x="126.9" y="90.9" width="3.9" height="3.1" fill="#3a3af0"/><rect x="132.8" y="90.9" width="43.3" height="3.1" fill="#555555"/><rect x="22.5" y="94.9" width="31.5" height="3.1" fill="#555555"/><rect x="22.5" y="98.8" width="17.7" height="3.1" fill="#555555"/><rect x="14.6" y="102.8" width="7.9" height="3.1" fill="#3a3af0"/><rect x="24.4" y="102.8" width="51.2" height="3.1" fill="#555555"/><rect x="77.6" y="102.8" width="3.9" height="3.1" fill="#3a3af0"/><rect x="83.5" y="102.8" width="3.9" height="3.1" fill="#555555"/><rect x="22.5" y="106.7" width="7.9" height="3.1" fill="#3a3af0"/><rect x="32.3" y="106.7" width="41.4" height="3.1" fill="#555555"/><rect x="75.7" y="106.7" width="3.9" height="3.1" fill="#3a3af0"/><rect x="81.6" y="106.7" width="2.0" height="3.1" fill="#555555"/><rect x="30.4" y="110.7" width="3.9" height="3.1" fill="#3a3af0"/><rect x="36.3" y="110.7" width="31.5" height="3.1" fill="#555555"/><rect x="69.8" y="110.7" width="2.0" height="3.1" fill="#555555"/><rect x="73.7" y="110.7" width="29.6" height="3.1" fill="#555555"/><rect x="22.5" y="114.7" width="7.9" height="3.1" fill="#3a3af0"/><rect x="32.3" y="114.7" width="39.4" height="3.1" fill="#555555"/><rect x="73.7" y="114.7" width="3.9" height="3.1" fill="#3a3af0"/><rect x="79.6" y="114.7" width="2.0" height="3.1" fill="#555555"/><rect x="30.4" y="118.6" width="3.9" height="3.1" fill="#3a3af0"/><rect x="36.3" y="118.6" width="19.7" height="3.1" fill="#555555"/><rect x="57.9" y="118.6" width="2.0" height="3.1" fill="#555555"/><rect x="61.9" y="118.6" width="19.7" height="3.1" fill="#555555"/><rect x="22.5" y="122.6" width="7.9" height="3.1" fill="#3a3af0"/><rect x="32.3" y="122.6" width="57.1" height="3.1" fill="#555555"/><rect x="91.4" y="122.6" width="3.9" height="3.1" fill="#3a3af0"/><rect x="97.3" y="122.6" width="3.9" height="3.1" fill="#555555"/><rect x="30.4" y="126.5" width="3.9" height="3.1" fill="#3a3af0"/><rect x="36.3" y="126.5" width="17.7" height="3.1" fill="#555555"/><rect x="56.0" y="126.5" width="2.0" height="3.1" fill="#555555"/><rect x="59.9" y="126.5" width="19.7" height="3.1" fill="#555555"/><rect x="22.5" y="130.5" width="7.9" height="3.1" fill="#3a3af0"/><rect x="32.3" y="130.5" width="19.7" height="3.1" fill="#555555"/><rect x="54.0" y="130.5" width="3.9" height="3.1" fill="#555555"/><rect x="30.4" y="134.5" width="3.9" height="3.1" fill="#3a3af0"/><rect x="36.3" y="134.5" width="21.7" height="3.1" fill="#555555"/><rect x="59.9" y="134.5" width="2.0" height="3.1" fill="#555555"/><rect x="63.8" y="134.5" width="19.7" height="3.1" fill="#555555"/><rect x="14.6" y="138.4" width="9.8" height="3.1" fill="#3a3af0"/><rect x="26.4" y="138.4" width="43.3" height="3.1" fill="#555555"/><rect x="71.7" y="138.4" width="2.0" height="3.1" fill="#555555"/><rect x="75.7" y="138.4" width="25.6" height="3.1" fill="#555555"/><rect x="103.2" y="138.4" width="5.9" height="3.1" fill="#2c9a6a"/><rect x="111.1" y="138.4" width="25.6" height="3.1" fill="#3a3af0"/><rect x="14.6" y="142.4" width="5.9" height="3.1" fill="#3a3af0"/><rect x="22.5" y="142.4" width="33.5" height="3.1" fill="#555555"/><rect x="57.9" y="142.4" width="2.0" height="3.1" fill="#555555"/><rect x="61.9" y="142.4" width="2.0" height="3.1" fill="#2c9a6a"/><rect x="14.6" y="146.3" width="9.8" height="3.1" fill="#3a3af0"/><rect x="26.4" y="146.3" width="3.9" height="3.1" fill="#3a3af0"/><rect x="32.3" y="146.3" width="80.8" height="3.1" fill="#555555"/><rect x="115.1" y="146.3" width="19.7" height="3.1" fill="#555555"/><rect x="14.6" y="150.3" width="5.9" height="3.1" fill="#3a3af0"/><rect x="14.6" y="154.3" width="7.9" height="3.1" fill="#3a3af0"/><rect x="14.6" y="158.2" width="11.8" height="3.1" fill="#3a3af0"/><rect x="28.4" y="158.2" width="2.0" height="3.1" fill="#2c9a6a"/><rect x="32.3" y="158.2" width="3.9" height="3.1" fill="#3a3af0"/><rect x="38.2" y="158.2" width="21.7" height="3.1" fill="#555555"/><rect x="61.9" y="158.2" width="17.7" height="3.1" fill="#3a3af0"/><rect x="81.6" y="158.2" width="3.9" height="3.1" fill="#3a3af0"/><rect x="87.5" y="158.2" width="7.9" height="3.1" fill="#555555"/><rect x="97.3" y="158.2" width="3.9" height="3.1" fill="#555555"/><rect x="103.2" y="158.2" width="5.9" height="3.1" fill="#555555"/><rect x="111.1" y="158.2" width="17.7" height="3.1" fill="#555555"/><rect x="130.8" y="158.2" width="2.0" height="3.1" fill="#2c9a6a"/><rect x="134.8" y="158.2" width="3.9" height="3.1" fill="#3a3af0"/><rect x="140.7" y="158.2" width="27.6" height="3.1" fill="#555555"/></svg>
<div class="a" style="left:2812.00px;top:170.00px;width:28.00px;height:165.00px;background:#fdfdfd;border-left:1px solid #e2e2e2"></div>
<div class="a" style="left:2812.00px;top:169.80px;width:28.00px;height:3.70px;background:#555;"></div>
<div class="a" style="left:2812.00px;top:173.50px;width:28.00px;height:35.80px;background:#c4c4c4;"></div>
<div class="a" style="left:2004.50px;top:175.50px;width:461.50px;height:425.00px;background:rgba(240,240,240,0.98);border-radius:11px;border:1px solid #b8b8b8;box-shadow:0 8px 26px rgba(0,0,0,0.25)"></div>
<div class="a" style="left:2005.50px;top:221.20px;width:459.50px;height:37.00px;background:#3f8ef8;"></div>
<div class="a" style="left:2005.50px;top:267.00px;width:459.50px;height:4.20px;background:#dedede;"></div>
<div class="a" style="left:2005.50px;top:405.50px;width:459.50px;height:4.20px;background:#dedede;"></div>
<div class="a" style="left:2005.50px;top:541.80px;width:459.50px;height:4.20px;background:#dedede;"></div>
<div class="t" style="left:2047.20px;top:187.24px;font-size:27.6px;color:#2b2b2b;font-weight:normal;font-family:'Liberation Sans';-webkit-text-stroke:0.3px #2b2b2b">Go to Definition</div>
<div class="t" style="left:2047.20px;top:225.54px;font-size:27.6px;color:#fff;font-weight:normal;font-family:'Liberation Sans';-webkit-text-stroke:0.3px #fff">Peek Definition</div>
<div class="t" style="left:2047.20px;top:286.14px;font-size:27.6px;color:#2b2b2b;font-weight:normal;font-family:'Liberation Sans';-webkit-text-stroke:0.3px #2b2b2b">Change All Occurrences</div>
<div class="t" style="left:2047.20px;top:323.94px;font-size:27.6px;color:#2b2b2b;font-weight:normal;font-family:'Liberation Sans';-webkit-text-stroke:0.3px #2b2b2b">Format Document</div>
<div class="t" style="left:2047.20px;top:423.24px;font-size:27.6px;color:#2b2b2b;font-weight:normal;font-family:'Liberation Sans';-webkit-text-stroke:0.3px #2b2b2b">Cut</div>
<div class="t" style="left:2047.20px;top:459.44px;font-size:27.6px;color:#2b2b2b;font-weight:normal;font-family:'Liberation Sans';-webkit-text-stroke:0.3px #2b2b2b">Copy</div>
<div class="t" style="left:2047.20px;top:498.04px;font-size:27.6px;color:#2b2b2b;font-weight:normal;font-family:'Liberation Sans';-webkit-text-stroke:0.3px #2b2b2b">Paste</div>
<div class="t" style="left:2047.20px;top:558.54px;font-size:27.6px;color:#2b2b2b;font-weight:normal;font-family:'Liberation Sans';-webkit-text-stroke:0.3px #2b2b2b">Command Palette...</div>
<div class="t" style="left:2047.20px;top:361.64px;font-size:27.6px;color:#2b2b2b;font-weight:normal;font-family:'Liberation Sans';">Format Selection</div>
<div class="t" style="left:2273.00px;top:361.64px;font-size:27.6px;color:#2b2b2b;font-weight:normal;font-family:'Liberation Sans';">[</div>
<div class="t" style="left:2310.00px;top:361.64px;font-size:27.6px;color:#2b2b2b;font-weight:normal;font-family:'Liberation Sans';">K</div>
<div class="t" style="left:2361.50px;top:361.64px;font-size:27.6px;color:#2b2b2b;font-weight:normal;font-family:'Liberation Sans';">F]</div>
<div class="t" style="left:2422.80px;top:192.38px;font-size:22px;color:#2b2b2b;font-weight:normal;font-family:'Liberation Sans';">F12</div>
<div class="t" style="left:2422.80px;top:230.88px;font-size:22px;color:#fff;font-weight:normal;font-family:'Liberation Sans';">F12</div>
<div class="t" style="left:2422.00px;top:291.38px;font-size:22px;color:#2b2b2b;font-weight:normal;font-family:'Liberation Sans';">F2</div>
<div class="t" style="left:2421.00px;top:323.94px;font-size:27.6px;color:#2b2b2b;font-weight:normal;font-family:'Liberation Sans';">F</div>
<div class="t" style="left:2421.00px;top:423.24px;font-size:27.6px;color:#2b2b2b;font-weight:normal;font-family:'Liberation Sans';">X</div>
<div class="t" style="left:2421.00px;top:459.44px;font-size:27.6px;color:#2b2b2b;font-weight:normal;font-family:'Liberation Sans';">C</div>
<div class="t" style="left:2421.00px;top:498.04px;font-size:27.6px;color:#2b2b2b;font-weight:normal;font-family:'Liberation Sans';">V</div>
<div class="t" style="left:2421.00px;top:558.54px;font-size:27.6px;color:#2b2b2b;font-weight:normal;font-family:'Liberation Sans';">P</div>
<svg style="left:0.00px;top:0.00px;" width="2844" height="700" viewBox="0 0 2844 700"><g fill="none" stroke="#333" stroke-width="2.2"><path d="M2291.36 370.23000000000013 V382.76999999999987 M2296.64 370.23000000000013 V382.76999999999987 M2287.73 373.8600000000001 H2300.27 M2287.73 379.1399999999999 H2300.27"/><circle cx="2287.73" cy="370.23000000000013" r="3.6300000000000003"/><circle cx="2287.73" cy="382.76999999999987" r="3.6300000000000003"/><circle cx="2300.27" cy="370.23000000000013" r="3.6300000000000003"/><circle cx="2300.27" cy="382.76999999999987" r="3.6300000000000003"/></g><g fill="none" stroke="#333" stroke-width="2.2"><path d="M2344.86 370.23000000000013 V382.76999999999987 M2350.14 370.23000000000013 V382.76999999999987 M2341.23 373.8600000000001 H2353.77 M2341.23 379.1399999999999 H2353.77"/><circle cx="2341.23" cy="370.23000000000013" r="3.6300000000000003"/><circle cx="2341.23" cy="382.76999999999987" r="3.6300000000000003"/><circle cx="2353.77" cy="370.23000000000013" r="3.6300000000000003"/><circle cx="2353.77" cy="382.76999999999987" r="3.6300000000000003"/></g><path d="M2393.4 231 H2401.08 L2410.2000000000003 248.5 H2417.4 M2406.6 231 H2417.4" fill="none" stroke="#fff" stroke-width="2.4"/><g fill="none" stroke="#333" stroke-width="2.2"><path d="M2405.36 294.9300000000001 V307.46999999999986 M2410.64 294.9300000000001 V307.46999999999986 M2401.73 298.5600000000001 H2414.27 M2401.73 303.83999999999986 H2414.27"/><circle cx="2401.73" cy="294.9300000000001" r="3.6300000000000003"/><circle cx="2401.73" cy="307.46999999999986" r="3.6300000000000003"/><circle cx="2414.27" cy="294.9300000000001" r="3.6300000000000003"/><circle cx="2414.27" cy="307.46999999999986" r="3.6300000000000003"/></g><path d="M2367 329 H2374.68 L2383.8 346.5 H2391 M2380.2 329 H2391" fill="none" stroke="#333" stroke-width="2.2"/><path d="M2408.5 328.5 L2417 337.5 H2413.06 V346.5 H2403.94 V337.5 H2400 Z" fill="none" stroke="#333" stroke-width="2" stroke-linejoin="round"/><g fill="none" stroke="#333" stroke-width="2.2"><path d="M2405.36 431.53000000000014 V444.0699999999999 M2410.64 431.53000000000014 V444.0699999999999 M2401.73 435.16000000000014 H2414.27 M2401.73 440.4399999999999 H2414.27"/><circle cx="2401.73" cy="431.53000000000014" r="3.6300000000000003"/><circle cx="2401.73" cy="444.0699999999999" r="3.6300000000000003"/><circle cx="2414.27" cy="431.53000000000014" r="3.6300000000000003"/><circle cx="2414.27" cy="444.0699999999999" r="3.6300000000000003"/></g><g fill="none" stroke="#333" stroke-width="2.2"><path d="M2405.36 467.73000000000013 V480.26999999999987 M2410.64 467.73000000000013 V480.26999999999987 M2401.73 471.3600000000001 H2414.27 M2401.73 476.6399999999999 H2414.27"/><circle cx="2401.73" cy="467.73000000000013" r="3.6300000000000003"/><circle cx="2401.73" cy="480.26999999999987" r="3.6300000000000003"/><circle cx="2414.27" cy="467.73000000000013" r="3.6300000000000003"/><circle cx="2414.27" cy="480.26999999999987" r="3.6300000000000003"/></g><g fill="none" stroke="#333" stroke-width="2.2"><path d="M2405.36 506.3300000000001 V518.8699999999998 M2410.64 506.3300000000001 V518.8699999999998 M2401.73 509.9600000000001 H2414.27 M2401.73 515.2399999999998 H2414.27"/><circle cx="2401.73" cy="506.3300000000001" r="3.6300000000000003"/><circle cx="2401.73" cy="518.8699999999998" r="3.6300000000000003"/><circle cx="2414.27" cy="506.3300000000001" r="3.6300000000000003"/><circle cx="2414.27" cy="518.8699999999998" r="3.6300000000000003"/></g><path d="M2380.4 563.2 L2390.4 572.2 H2385.6800000000003 V581.2 H2375.12 V572.2 H2370.4 Z" fill="none" stroke="#333" stroke-width="2" stroke-linejoin="round"/><g fill="none" stroke="#333" stroke-width="2.2"><path d="M2405.36 566.9300000000002 V579.4699999999999 M2410.64 566.9300000000002 V579.4699999999999 M2401.73 570.5600000000002 H2414.27 M2401.73 575.8399999999999 H2414.27"/><circle cx="2401.73" cy="566.9300000000002" r="3.6300000000000003"/><circle cx="2401.73" cy="579.4699999999999" r="3.6300000000000003"/><circle cx="2414.27" cy="566.9300000000002" r="3.6300000000000003"/><circle cx="2414.27" cy="579.4699999999999" r="3.6300000000000003"/></g></svg>
<div class="t" style="left:709.00px;top:394.96px;font-size:21.9px;color:#1e1e1e;font-weight:bold;font-family:'Liberation Sans';">RESULTS</div>
<div class="a" style="left:671.00px;top:426.00px;width:996.20px;height:57.00px;background:#f3f3f3;"></div>
<div class="a" style="left:671.00px;top:482.00px;width:996.20px;height:1.50px;background:#a9a9a9;"></div>
<div class="a" style="left:671.00px;top:539.30px;width:996.20px;height:2.40px;background:#111;"></div>
<div class="a" style="left:671.00px;top:596.80px;width:996.20px;height:2.40px;background:#111;"></div>
<div class="a" style="left:671.00px;top:654.30px;width:996.20px;height:2.40px;background:#111;"></div>
<div class="a" style="left:671.00px;top:711.80px;width:996.20px;height:2.40px;background:#111;"></div>
<div class="a" style="left:717.40px;top:483.00px;width:237.50px;height:57.50px;background:#a8d1fb;outline:1.5px dotted #8a8a8a;outline-offset:-2px"></div>
<div class="a" style="left:716.65px;top:426.00px;width:1.50px;height:316.00px;background:transparent;border-left:1.6px dotted #909090"></div>
<div class="a" style="left:954.15px;top:426.00px;width:1.50px;height:316.00px;background:transparent;border-left:1.6px dotted #909090"></div>
<div class="a" style="left:1191.55px;top:426.00px;width:1.50px;height:316.00px;background:transparent;border-left:1.6px dotted #909090"></div>
<div class="a" style="left:1428.95px;top:426.00px;width:1.50px;height:316.00px;background:transparent;border-left:1.6px dotted #909090"></div>
<div class="a" style="left:1666.45px;top:426.00px;width:1.50px;height:316.00px;background:transparent;border-left:1.6px dotted #909090"></div>
<div class="t" style="left:738.90px;top:443.24px;font-size:26.3px;color:#222;font-weight:normal;font-family:'Liberation Sans';">query_id</div>
<div class="t" style="left:976.40px;top:443.24px;font-size:26.3px;color:#222;font-weight:normal;font-family:'Liberation Sans';">last_execution...</div>
<div class="t" style="left:1213.80px;top:443.24px;font-size:26.3px;color:#222;font-weight:normal;font-family:'Liberation Sans';">max_duration</div>
<div class="t" style="left:1451.20px;top:443.24px;font-size:26.3px;color:#222;font-weight:normal;font-family:'Liberation Sans';">plan_id</div>
<div class="a" style="left:0;top:0;width:2844px;height:742px;overflow:hidden"><div class="t" style="left:687.00px;top:502.68px;font-size:24.6px;color:#222;font-weight:normal;font-family:'Liberation Sans';font-style:italic">1</div>
<div class="t" style="left:738.90px;top:501.15px;font-size:26.4px;color:#1a1a1a;font-weight:normal;font-family:'Liberation Sans';">41996</div>
<div class="t" style="left:976.40px;top:501.15px;font-size:26.4px;color:#1a1a1a;font-weight:normal;font-family:'Liberation Sans';">2017-10-11 10:...</div>
<div class="t" style="left:1213.80px;top:501.15px;font-size:26.4px;color:#1a1a1a;font-weight:normal;font-family:'Liberation Sans';">61931</div>
<div class="t" style="left:1451.20px;top:501.15px;font-size:26.4px;color:#1a1a1a;font-weight:normal;font-family:'Liberation Sans';">525</div>
<div class="t" style="left:687.00px;top:560.08px;font-size:24.6px;color:#222;font-weight:normal;font-family:'Liberation Sans';font-style:italic">2</div>
<div class="t" style="left:738.90px;top:558.55px;font-size:26.4px;color:#1a1a1a;font-weight:normal;font-family:'Liberation Sans';">42563</div>
<div class="t" style="left:976.40px;top:558.55px;font-size:26.4px;color:#1a1a1a;font-weight:normal;font-family:'Liberation Sans';">2017-10-12 03...</div>
<div class="t" style="left:1213.80px;top:558.55px;font-size:26.4px;color:#1a1a1a;font-weight:normal;font-family:'Liberation Sans';">221918</div>
<div class="t" style="left:1451.20px;top:558.55px;font-size:26.4px;color:#1a1a1a;font-weight:normal;font-family:'Liberation Sans';">665</div>
<div class="t" style="left:687.00px;top:617.48px;font-size:24.6px;color:#222;font-weight:normal;font-family:'Liberation Sans';font-style:italic">3</div>
<div class="t" style="left:738.90px;top:615.95px;font-size:26.4px;color:#1a1a1a;font-weight:normal;font-family:'Liberation Sans';">42561</div>
<div class="t" style="left:976.40px;top:615.95px;font-size:26.4px;color:#1a1a1a;font-weight:normal;font-family:'Liberation Sans';">2017-10-12 03...</div>
<div class="t" style="left:1213.80px;top:615.95px;font-size:26.4px;color:#1a1a1a;font-weight:normal;font-family:'Liberation Sans';">61414</div>
<div class="t" style="left:1451.20px;top:615.95px;font-size:26.4px;color:#1a1a1a;font-weight:normal;font-family:'Liberation Sans';">663</div>
<div class="t" style="left:687.00px;top:674.88px;font-size:24.6px;color:#222;font-weight:normal;font-family:'Liberation Sans';font-style:italic">4</div>
<div class="t" style="left:738.90px;top:673.35px;font-size:26.4px;color:#1a1a1a;font-weight:normal;font-family:'Liberation Sans';">42561</div>
<div class="t" style="left:976.40px;top:673.35px;font-size:26.4px;color:#1a1a1a;font-weight:normal;font-family:'Liberation Sans';">2017-10-12 03...</div>
<div class="t" style="left:1213.80px;top:673.35px;font-size:26.4px;color:#1a1a1a;font-weight:normal;font-family:'Liberation Sans';">51169</div>
<div class="t" style="left:1451.20px;top:673.35px;font-size:26.4px;color:#1a1a1a;font-weight:normal;font-family:'Liberation Sans';">663</div>
<div class="t" style="left:687.00px;top:732.28px;font-size:24.6px;color:#222;font-weight:normal;font-family:'Liberation Sans';font-style:italic">5</div>
<div class="t" style="left:738.90px;top:730.75px;font-size:26.4px;color:#1a1a1a;font-weight:normal;font-family:'Liberation Sans';">42563</div>
<div class="t" style="left:976.40px;top:730.75px;font-size:26.4px;color:#1a1a1a;font-weight:normal;font-family:'Liberation Sans';">2017-10-12 03...</div>
<div class="t" style="left:1213.80px;top:730.75px;font-size:26.4px;color:#1a1a1a;font-weight:normal;font-family:'Liberation Sans';">563056</div>
<div class="t" style="left:1451.20px;top:730.75px;font-size:26.4px;color:#1a1a1a;font-weight:normal;font-family:'Liberation Sans';">665</div></div>
<svg style="left:0.00px;top:0.00px;" width="2844" height="700" viewBox="0 0 2844 700"><path d="M2771 447.5 H2784" stroke="#0e5ec2" stroke-width="3.2"/><path d="M2779 443 L2785 447.5 L2779 452" fill="#0e5ec2" stroke="#0e5ec2" stroke-width="1.5"/><path d="M2776 468 V454 M2782 468 V452 M2788 468 V449 L2793 454 V468 M2775 468 H2795" fill="none" stroke="#3a3a3a" stroke-width="2.4"/><path d="M2771 502.5 H2784" stroke="#0e5ec2" stroke-width="3.2"/><path d="M2779 498 L2785 502.5 L2779 507" fill="#0e5ec2" stroke="#0e5ec2" stroke-width="1.5"/><text x="2774" y="524" font-family="Liberation Sans" font-size="24" font-weight="bold" fill="#333">{ }</text><path d="M2771 557.5 H2784" stroke="#0e5ec2" stroke-width="3.2"/><path d="M2779 553 L2785 557.5 L2779 562" fill="#0e5ec2" stroke="#0e5ec2" stroke-width="1.5"/><path d="M2775 561 V578 H2783" fill="none" stroke="#3a3a3a" stroke-width="2.2"/><rect x="2786" y="567" width="12" height="11" fill="#3a3a3a"/><path d="M2786 571 H2798 M2786 575 H2798 M2790 567 V578 M2794 567 V578" stroke="#fff" stroke-width="1"/><path d="M2787 557 L2792 559 L2795 565 H2789 Z" fill="#3a3a3a"/><circle cx="2787" cy="614" r="6.5" fill="none" stroke="#333" stroke-width="2.3"/><path d="M2773 632 Q2776 622 2782 618 M2780 632 V621 M2786 632 V621 M2792 632 V620 M2798 632 V607 M2770 636 H2800" fill="none" stroke="#333" stroke-width="2.3"/></svg>
<div class="a" style="left:2812.00px;top:426.00px;width:28.00px;height:316.00px;background:#fdfdfd;border-left:1px solid #e2e2e2"></div>
<div class="a" style="left:2812.00px;top:427.00px;width:28.00px;height:239.00px;background:#c4c4c4;"></div>
<svg style="left:704.80px;top:770.00px;" width="17" height="18" viewBox="0 0 17 18"><path d="M0 1.5 H16 M0 6.5 H11 M0 11.5 H16 M0 16.5 H11" stroke="#333" stroke-width="2"/></svg>
<div class="t" style="left:734.20px;top:764.09px;font-size:27.3px;color:#333;font-weight:normal;font-family:'Liberation Sans';">kubernetes:WideWorldImporters</div>
<svg style="left:1149.00px;top:773.00px;" width="17" height="17" viewBox="0 0 17 17"><path d="M2 2 L15 15 M15 2 L2 15" stroke="#3a3a3a" stroke-width="4.2"/></svg>
<svg style="left:2731.00px;top:766.80px;" width="28" height="28" viewBox="0 0 28 28"><path d="M11 9 V1.5 H22.5 L27 6 V21 H21" fill="none" stroke="#424242" stroke-width="2.4"/><path d="M7 14 H1.5 V25.5 H13" fill="none" stroke="#424242" stroke-width="2.4"/><circle cx="14.5" cy="15" r="6.2" fill="none" stroke="#0e4a96" stroke-width="2.6"/><line x1="19" y1="19.5" x2="26" y2="26.5" stroke="#0e4a96" stroke-width="3"/></svg>
<div class="a" style="left:2794.10px;top:776.40px;width:6.40px;height:6.40px;background:#3a3a3a;border-radius:50%"></div>
<div class="a" style="left:2804.00px;top:776.40px;width:6.40px;height:6.40px;background:#3a3a3a;border-radius:50%"></div>
<div class="a" style="left:2814.00px;top:776.40px;width:6.40px;height:6.40px;background:#3a3a3a;border-radius:50%"></div>
<svg style="left:678.00px;top:826.00px;" width="22" height="32" viewBox="0 0 22 32"><rect x="1" y="1" width="19" height="29" fill="none" stroke="#111" stroke-width="1.8"/><line x1="0" y1="20.5" x2="21" y2="20.5" stroke="#111" stroke-width="1.8"/><rect x="4.2" y="4.5" width="4.5" height="4.5" fill="none" stroke="#111" stroke-width="1.3"/></svg>
<div class="t" style="left:720.70px;top:828.46px;font-size:27.1px;color:#333;font-weight:normal;font-family:'Liberation Sans';">kubernetes</div>
<svg style="left:873.00px;top:826.00px;" width="18" height="32" viewBox="0 0 18 32"><path d="M1.5 1.5 L15.5 15.5 L1.5 29.5" fill="none" stroke="#111" stroke-width="2.4"/></svg>
<svg style="left:911.60px;top:827.00px;" width="24" height="29" viewBox="0 0 24 29"><path d="M0.5 5 Q0.5 0.5 12 0.5 Q23.5 0.5 23.5 5 V24 Q23.5 28.5 12 28.5 Q0.5 28.5 0.5 24 Z" fill="#3d3d3d"/><ellipse cx="12" cy="5.5" rx="9.8" ry="3.6" fill="#e8e8e8"/></svg>
<div class="t" style="left:950.50px;top:828.46px;font-size:27.1px;color:#333;font-weight:normal;font-family:'Liberation Sans';">WideWorldImporters</div>
<div class="a" style="left:688.00px;top:890.00px;width:1042.00px;height:506.00px;background:#fff;border:6px solid #e9e9e9"></div>
<div class="t" style="left:704.50px;top:900.19px;font-size:27.3px;color:#444;font-weight:normal;font-family:'Liberation Sans';">QDS: Top 5 slowest queries</div>
<div class="a" style="left:1693.00px;top:920.00px;width:3.60px;height:3.60px;background:#333;border-radius:50%"></div>
<div class="a" style="left:1700.20px;top:920.00px;width:3.60px;height:3.60px;background:#333;border-radius:50%"></div>
<div class="a" style="left:1707.40px;top:920.00px;width:3.60px;height:3.60px;background:#333;border-radius:50%"></div>
<div class="a" style="left:763.40px;top:968.00px;width:85.00px;height:29.00px;background:#fbc1ce;border:6px solid #f45c7e"></div>
<div class="t" style="left:858.00px;top:973.94px;font-size:23.7px;color:#222;font-weight:normal;font-family:'Liberation Sans';">41996</div>
<div class="a" style="left:940.80px;top:968.00px;width:85.00px;height:29.00px;background:#a9d6f5;border:6px solid #2b9be9"></div>
<div class="t" style="left:1035.00px;top:973.94px;font-size:23.7px;color:#222;font-weight:normal;font-family:'Liberation Sans';">42076</div>
<div class="a" style="left:1117.60px;top:968.00px;width:85.00px;height:29.00px;background:#fee9b3;border:6px solid #fdcd45"></div>
<div class="t" style="left:1212.50px;top:973.94px;font-size:23.7px;color:#222;font-weight:normal;font-family:'Liberation Sans';">42401</div>
<div class="a" style="left:1295.00px;top:968.00px;width:85.00px;height:29.00px;background:#f4f5f7;border:6px solid #e4e5e8"></div>
<div class="t" style="left:1389.00px;top:973.94px;font-size:23.7px;color:#222;font-weight:normal;font-family:'Liberation Sans';">42563</div>
<div class="a" style="left:1472.00px;top:968.00px;width:85.00px;height:29.00px;background:#b1e3e3;border:6px solid #3cbdbf"></div>
<div class="t" style="left:1566.00px;top:973.94px;font-size:23.7px;color:#222;font-weight:normal;font-family:'Liberation Sans';text-decoration:line-through;text-decoration-thickness:2.5px">42583</div>
<svg style="left:0.00px;top:0.00px;" width="2844" height="1611" viewBox="0 0 2844 1611"><line x1="830" y1="1015.0" x2="1691.7" y2="1015.0" stroke="#2383b6" stroke-width="1.6"/><line x1="830" y1="1071.2" x2="1691.7" y2="1071.2" stroke="#2383b6" stroke-width="1.6"/><line x1="830" y1="1127.3" x2="1691.7" y2="1127.3" stroke="#2383b6" stroke-width="1.6"/><line x1="830" y1="1183.5" x2="1691.7" y2="1183.5" stroke="#2383b6" stroke-width="1.6"/><line x1="849.0" y1="1015" x2="849.0" y2="1200" stroke="#2383b6" stroke-width="1.6"/><line x1="1059.7" y1="1015" x2="1059.7" y2="1200" stroke="#2383b6" stroke-width="1.6"/><line x1="1270.3" y1="1015" x2="1270.3" y2="1200" stroke="#2383b6" stroke-width="1.6"/><line x1="1481.0" y1="1015" x2="1481.0" y2="1200" stroke="#2383b6" stroke-width="1.6"/><line x1="1691.7" y1="1015" x2="1691.7" y2="1200" stroke="#2383b6" stroke-width="1.6"/><line x1="830" y1="1183.5" x2="849" y2="1183.5" stroke="#aaa" stroke-width="1.6"/><line x1="849" y1="1183.5" x2="849" y2="1200" stroke="#aaa" stroke-width="1.6"/><line x1="968" y1="1024" x2="968" y2="1120.5" stroke="#e2e3e8" stroke-width="5"/><circle cx="968" cy="1024" r="4.8" fill="#e2e3e8"/><circle cx="968" cy="1120.5" r="4.8" fill="#e2e3e8"/><circle cx="878.5" cy="1127.3" r="4.8" fill="#fdcd45"/><line x1="880.3" y1="1154.5" x2="1615.4" y2="1151" stroke="#2b9be9" stroke-width="5.5"/><circle cx="880.3" cy="1154.5" r="5" fill="#2b9be9"/><circle cx="1615.4" cy="1151" r="5" fill="#2b9be9"/><line x1="880.3" y1="1110.7" x2="896" y2="1164.6" stroke="#f45c7e" stroke-width="5.5"/><circle cx="880.3" cy="1110.7" r="5" fill="#f45c7e"/><circle cx="896" cy="1164.6" r="5" fill="#f45c7e"/></svg>
<div class="t" style="left:827.50px;top:1003.59px;font-size:23.4px;color:#222;font-weight:normal;font-family:'Liberation Sans';transform:translateX(-100%)">600000</div>
<div class="t" style="left:827.50px;top:1059.76px;font-size:23.4px;color:#222;font-weight:normal;font-family:'Liberation Sans';transform:translateX(-100%)">400000</div>
<div class="t" style="left:827.50px;top:1115.93px;font-size:23.4px;color:#222;font-weight:normal;font-family:'Liberation Sans';transform:translateX(-100%)">200000</div>
<div class="t" style="left:827.50px;top:1172.09px;font-size:23.4px;color:#222;font-weight:normal;font-family:'Liberation Sans';transform:translateX(-100%)">0</div>
<div class="t" style="left:734.70px;top:1077.82px;font-size:23.6px;color:#222;font-weight:normal;font-family:'Liberation Sans';transform:translateX(-50%) rotate(-90deg);transform-origin:50% 80%">max_duration</div>
<div class="t" style="left:838.5px;top:1196px;font-size:23.4px;color:#222;transform-origin:0 0;transform:rotate(-45deg) translate(-100%,0px)">Oct 11, 2017</div>
<div class="t" style="left:1049.2px;top:1196px;font-size:23.4px;color:#222;transform-origin:0 0;transform:rotate(-45deg) translate(-100%,0px)">Oct 13, 2017</div>
<div class="t" style="left:1259.8px;top:1196px;font-size:23.4px;color:#222;transform-origin:0 0;transform:rotate(-45deg) translate(-100%,0px)">Oct 15, 2017</div>
<div class="t" style="left:1470.5px;top:1196px;font-size:23.4px;color:#222;transform-origin:0 0;transform:rotate(-45deg) translate(-100%,0px)">Oct 17, 2017</div>
<div class="t" style="left:1681.2px;top:1196px;font-size:23.4px;color:#222;transform-origin:0 0;transform:rotate(-45deg) translate(-100%,0px)">Oct 19, 2017</div>
<div class="t" style="left:1268.50px;top:1346.15px;font-size:23.8px;color:#222;font-weight:normal;font-family:'Liberation Sans';transform:translateX(-50%)">last_execution_time</div>
<div class="a" style="left:1758.60px;top:890.00px;width:1041.70px;height:506.00px;background:#fff;border:6px solid #e9e9e9"></div>
<div class="t" style="left:1775.10px;top:900.19px;font-size:27.3px;color:#444;font-weight:normal;font-family:'Liberation Sans';">Space used by tables</div>
<div class="a" style="left:2763.30px;top:920.00px;width:3.60px;height:3.60px;background:#333;border-radius:50%"></div>
<div class="a" style="left:2770.50px;top:920.00px;width:3.60px;height:3.60px;background:#333;border-radius:50%"></div>
<div class="a" style="left:2777.70px;top:920.00px;width:3.60px;height:3.60px;background:#333;border-radius:50%"></div>
<div class="a" style="left:1804.60px;top:968.00px;width:85.00px;height:29.00px;background:#fba3b7;border:6px solid #f45c7e"></div>
<div class="t" style="left:1898.00px;top:973.94px;font-size:23.7px;color:#222;font-weight:normal;font-family:'Liberation Sans';text-decoration:line-through;text-decoration-thickness:2.5px">rows_count</div>
<div class="a" style="left:2038.70px;top:968.00px;width:85.00px;height:29.00px;background:#8ccaf5;border:6px solid #2b9be9"></div>
<div class="t" style="left:2133.00px;top:973.94px;font-size:23.7px;color:#222;font-weight:normal;font-family:'Liberation Sans';">total_pages</div>
<div class="a" style="left:2273.60px;top:968.00px;width:85.00px;height:29.00px;background:#fee29a;border:6px solid #fdcd45"></div>
<div class="t" style="left:2367.30px;top:973.94px;font-size:23.7px;color:#222;font-weight:normal;font-family:'Liberation Sans';">used_pages</div>
<div class="a" style="left:2513.50px;top:968.00px;width:85.00px;height:29.00px;background:#eff0f3;border:6px solid #e4e5e8"></div>
<div class="t" style="left:2607.60px;top:973.94px;font-size:23.7px;color:#222;font-weight:normal;font-family:'Liberation Sans';">data_pages</div>
<div class="a" style="left:1849.50px;top:1011.70px;width:85.00px;height:29.00px;background:#95d8d8;border:6px solid #3cbdbf"></div>
<div class="t" style="left:1944.00px;top:1017.64px;font-size:23.7px;color:#222;font-weight:normal;font-family:'Liberation Sans';">total_space_MB</div>
<div class="a" style="left:2132.00px;top:1011.70px;width:85.00px;height:29.00px;background:#bcd0de;border:6px solid #97b8cf"></div>
<div class="t" style="left:2227.00px;top:1017.64px;font-size:23.7px;color:#222;font-weight:normal;font-family:'Liberation Sans';">used_space_MB</div>
<div class="a" style="left:2420.00px;top:1011.70px;width:85.00px;height:29.00px;background:#e6e6e6;border:6px solid #dcdcdc"></div>
<div class="t" style="left:2514.60px;top:1017.64px;font-size:23.7px;color:#222;font-weight:normal;font-family:'Liberation Sans';">data_space_MB</div>
<svg style="left:0.00px;top:0.00px;" width="2844" height="1611" viewBox="0 0 2844 1611"><line x1="2133.4" y1="1058.0" x2="2735.7" y2="1058.0" stroke="#999" stroke-width="1.6"/><line x1="2133.4" y1="1109.6" x2="2735.7" y2="1109.6" stroke="#2383b6" stroke-width="1.6"/><line x1="2133.4" y1="1161.2" x2="2735.7" y2="1161.2" stroke="#2383b6" stroke-width="1.6"/><line x1="2133.4" y1="1212.8" x2="2735.7" y2="1212.8" stroke="#2383b6" stroke-width="1.6"/><line x1="2133.4" y1="1264.4" x2="2735.7" y2="1264.4" stroke="#2383b6" stroke-width="1.6"/><line x1="2133.4" y1="1316.0" x2="2735.7" y2="1316.0" stroke="#2383b6" stroke-width="1.6"/><line x1="2153.6" y1="1058" x2="2153.6" y2="1316" stroke="#2383b6" stroke-width="1.6"/><line x1="2347.6" y1="1058" x2="2347.6" y2="1316" stroke="#2383b6" stroke-width="1.6"/><line x1="2541.7" y1="1058" x2="2541.7" y2="1316" stroke="#2383b6" stroke-width="1.6"/><line x1="2735.7" y1="1058" x2="2735.7" y2="1316" stroke="#2383b6" stroke-width="1.6"/><line x1="2153.6" y1="1316" x2="2153.6" y2="1334" stroke="#aaa" stroke-width="1.6"/><rect x="2153.6" y="1063.8" width="442.2" height="6" fill="#87c3f0"/><rect x="2153.6" y="1069.8" width="441.4" height="6" fill="#fde39c"/><rect x="2153.6" y="1075.8" width="439.4" height="6" fill="#eeeff2"/><rect x="2153.6" y="1115.4" width="378.4" height="6" fill="#87c3f0"/><rect x="2153.6" y="1121.4" width="371.2" height="6" fill="#fde39c"/><rect x="2153.6" y="1127.4" width="369.0" height="6" fill="#eeeff2"/><rect x="2153.6" y="1167.0" width="193.4" height="6" fill="#87c3f0"/><rect x="2153.6" y="1173.0" width="193.4" height="6" fill="#fde39c"/><rect x="2153.6" y="1179.0" width="192.4" height="6" fill="#eeeff2"/><rect x="2153.6" y="1218.6" width="179.4" height="6" fill="#87c3f0"/><rect x="2153.6" y="1224.6" width="179.4" height="6" fill="#fde39c"/><rect x="2153.6" y="1230.6" width="178.4" height="6" fill="#eeeff2"/><rect x="2153.6" y="1270.2" width="44.4" height="6" fill="#87c3f0"/><rect x="2153.6" y="1276.2" width="42.4" height="6" fill="#fde39c"/><rect x="2153.6" y="1282.2" width="41.4" height="6" fill="#eeeff2"/></svg>
<div class="t" style="left:2132.00px;top:1070.94px;font-size:23.7px;color:#222;font-weight:normal;font-family:'Liberation Sans';transform:translateX(-100%)">Invoices</div>
<div class="t" style="left:2132.00px;top:1122.54px;font-size:23.7px;color:#222;font-weight:normal;font-family:'Liberation Sans';transform:translateX(-100%)">ColdRoomTemperatures_Archive</div>
<div class="t" style="left:2132.00px;top:1174.14px;font-size:23.7px;color:#222;font-weight:normal;font-family:'Liberation Sans';transform:translateX(-100%)">InvoiceLines</div>
<div class="t" style="left:2132.00px;top:1225.74px;font-size:23.7px;color:#222;font-weight:normal;font-family:'Liberation Sans';transform:translateX(-100%)">OrderLines</div>
<div class="t" style="left:2132.00px;top:1277.34px;font-size:23.7px;color:#222;font-weight:normal;font-family:'Liberation Sans';transform:translateX(-100%)">CustomerTransactions</div>
<div class="t" style="left:2153.60px;top:1336.34px;font-size:23.7px;color:#222;font-weight:normal;font-family:'Liberation Sans';transform:translateX(-50%)">0</div>
<div class="t" style="left:2347.63px;top:1336.34px;font-size:23.7px;color:#222;font-weight:normal;font-family:'Liberation Sans';transform:translateX(-50%)">5000</div>
<div class="t" style="left:2541.67px;top:1336.34px;font-size:23.7px;color:#222;font-weight:normal;font-family:'Liberation Sans';transform:translateX(-50%)">10000</div>
<div class="t" style="left:2735.70px;top:1336.34px;font-size:23.7px;color:#222;font-weight:normal;font-family:'Liberation Sans';transform:translateX(-50%)">15000</div>
<div class="a" style="left:688.00px;top:1424.60px;width:507.00px;height:215.40px;background:#fff;border:6px solid #e9e9e9"></div>
<div class="t" style="left:704.50px;top:1434.79px;font-size:27.3px;color:#444;font-weight:normal;font-family:'Liberation Sans';">Missing index and PKs</div>
<div class="a" style="left:1158.00px;top:1454.60px;width:3.60px;height:3.60px;background:#333;border-radius:50%"></div>
<div class="a" style="left:1165.20px;top:1454.60px;width:3.60px;height:3.60px;background:#333;border-radius:50%"></div>
<div class="a" style="left:1172.40px;top:1454.60px;width:3.60px;height:3.60px;background:#333;border-radius:50%"></div>
<svg style="left:720.00px;top:1489.00px;" width="30" height="30" viewBox="0 0 30 30"><ellipse cx="15.5" cy="14" rx="10.6" ry="14" fill="#555"/><ellipse cx="15.5" cy="14" rx="6.8" ry="11.3" fill="#fff"/></svg>
<div class="t" style="left:757.70px;top:1494.69px;font-size:27.3px;color:#444;font-weight:normal;font-family:'Liberation Sans';">Tables with Missing Indexes</div>
<svg style="left:720.00px;top:1528.50px;" width="30" height="30" viewBox="0 0 30 30"><ellipse cx="15.5" cy="14" rx="10.6" ry="14" fill="#555"/><ellipse cx="15.5" cy="14" rx="6.8" ry="11.3" fill="#fff"/></svg>
<div class="t" style="left:757.70px;top:1534.69px;font-size:27.3px;color:#444;font-weight:normal;font-family:'Liberation Sans';">Number of Missing Indexes</div>
<svg style="left:720.00px;top:1568.00px;" width="30" height="30" viewBox="0 0 30 30"><ellipse cx="15.5" cy="14" rx="10.6" ry="14" fill="#555"/><ellipse cx="15.5" cy="14" rx="6.8" ry="11.3" fill="#fff"/></svg>
<div class="a" style="left:1223.00px;top:1424.60px;width:507.00px;height:215.40px;background:#fff;border:6px solid #e9e9e9"></div>
<div class="t" style="left:1239.50px;top:1434.79px;font-size:27.3px;color:#444;font-weight:normal;font-family:'Liberation Sans';">Disk Usage</div>
<div class="a" style="left:1693.00px;top:1454.60px;width:3.60px;height:3.60px;background:#333;border-radius:50%"></div>
<div class="a" style="left:1700.20px;top:1454.60px;width:3.60px;height:3.60px;background:#333;border-radius:50%"></div>
<div class="a" style="left:1707.40px;top:1454.60px;width:3.60px;height:3.60px;background:#333;border-radius:50%"></div>
<div class="a" style="left:1353.00px;top:1506.00px;width:78.70px;height:22.40px;background:#fba3b6;"></div>
<div class="t" style="left:1444.50px;top:1506.94px;font-size:23.7px;color:#222;font-weight:normal;font-family:'Liberation Sans';">Used_Space</div>
<div class="a" style="left:1333.40px;top:1549.00px;width:79.30px;height:23.50px;background:#88c6f3;"></div>
<div class="t" style="left:1424.60px;top:1550.34px;font-size:23.7px;color:#222;font-weight:normal;font-family:'Liberation Sans';">Available_Space</div>
<div class="a" style="left:1758.50px;top:1424.60px;width:506.50px;height:215.40px;background:#fff;border:6px solid #e9e9e9"></div>
<div class="t" style="left:1775.00px;top:1434.79px;font-size:27.3px;color:#444;font-weight:normal;font-family:'Liberation Sans';">Data file space usage (MB)</div>
<div class="a" style="left:2228.00px;top:1454.60px;width:3.60px;height:3.60px;background:#333;border-radius:50%"></div>
<div class="a" style="left:2235.20px;top:1454.60px;width:3.60px;height:3.60px;background:#333;border-radius:50%"></div>
<div class="a" style="left:2242.40px;top:1454.60px;width:3.60px;height:3.60px;background:#333;border-radius:50%"></div>
<div class="a" style="left:1830.90px;top:1506.00px;width:79.00px;height:22.40px;background:#fba3b6;"></div>
<div class="t" style="left:1922.00px;top:1506.94px;font-size:23.7px;color:#222;font-weight:normal;font-family:'Liberation Sans';">reserved</div>
<div class="a" style="left:2033.80px;top:1506.00px;width:79.20px;height:22.40px;background:#88c6f3;"></div>
<div class="t" style="left:2125.00px;top:1506.94px;font-size:23.7px;color:#222;font-weight:normal;font-family:'Liberation Sans';">data</div>
<div class="a" style="left:1832.00px;top:1549.00px;width:79.00px;height:23.50px;background:#fde39c;"></div>
<div class="t" style="left:1924.00px;top:1550.34px;font-size:23.7px;color:#222;font-weight:normal;font-family:'Liberation Sans';">index</div>
<div class="a" style="left:2002.00px;top:1549.00px;width:78.00px;height:23.50px;background:#eeeff2;"></div>
<div class="t" style="left:2092.00px;top:1550.34px;font-size:23.7px;color:#222;font-weight:normal;font-family:'Liberation Sans';">unused</div>
<div class="a" style="left:2293.80px;top:1424.60px;width:505.20px;height:215.40px;background:#fff;border:6px solid #e9e9e9"></div>
<div class="a" style="left:2319.00px;top:1450.00px;width:455.00px;height:51.00px;background:#fff;border:1.6px solid #c8c8c8"></div>
<div class="t" style="left:2329.60px;top:1462.14px;font-size:27px;color:#8a8a8a;font-weight:normal;font-family:'Liberation Sans';">Search by name of type (a:, t:, v:, f...</div>
<div class="a" style="left:0.00px;top:1575.00px;width:2844.00px;height:36.00px;background:#0a70cd;"></div>
<svg style="left:29.80px;top:1579.00px;" width="18" height="32" viewBox="0 0 18 32"><circle cx="5" cy="4.5" r="3.3" fill="none" stroke="#fff" stroke-width="2"/><circle cx="5" cy="27" r="3.3" fill="none" stroke="#fff" stroke-width="2"/><circle cx="14" cy="9" r="3.3" fill="none" stroke="#fff" stroke-width="2"/><path d="M5 8 V23.5 M14 12.5 Q14 18 5 21" fill="none" stroke="#fff" stroke-width="2"/></svg>
<div class="t" style="left:54.00px;top:1586.08px;font-size:24px;color:#ffffff;font-weight:bold;font-family:'Liberation Sans';">master*</div>
<svg style="left:173.00px;top:1581.00px;" width="21" height="27" viewBox="0 0 21 27"><path d="M3 12 A8.5 8.5 0 0 1 17.5 5.5" fill="none" stroke="#fff" stroke-width="3"/><path d="M13 1.5 L19.5 4 L17 10.5" fill="none" stroke="#fff" stroke-width="2.6"/><path d="M18 14 A8.5 8.5 0 0 1 3.5 20.5" fill="none" stroke="#fff" stroke-width="3"/><path d="M8 24.5 L1.5 22 L4 15.5" fill="none" stroke="#fff" stroke-width="2.6"/></svg>
<svg style="left:219.00px;top:1587.00px;" width="22" height="22" viewBox="0 0 22 22"><circle cx="11" cy="11" r="10.8" fill="#fff"/><path d="M6.5 6.5 L15.5 15.5 M15.5 6.5 L6.5 15.5" stroke="#0a70cd" stroke-width="3"/></svg>
<div class="t" style="left:249.50px;top:1585.24px;font-size:25px;color:#ffffff;font-weight:normal;font-family:'Liberation Sans';">0</div>
<svg style="left:273.00px;top:1587.00px;" width="21" height="20" viewBox="0 0 21 20"><path d="M10.5 0 L21 20 H0 Z" fill="#fff"/><path d="M10.5 6 V14 M10.5 16 V18.5" stroke="#0a70cd" stroke-width="2.4"/></svg>
<div class="t" style="left:303.50px;top:1585.24px;font-size:25px;color:#ffffff;font-weight:normal;font-family:'Liberation Sans';">0</div>
<div class="t" style="left:1766.00px;top:1586.59px;font-size:23.4px;color:#ffffff;font-weight:bold;font-family:'Liberation Sans';">kubernetes : WideWorldImporters</div>
<div class="t" style="left:2173.40px;top:1587.52px;font-size:22.3px;color:#ffffff;font-weight:bold;font-family:'Liberation Sans';">Ln 1, Col 1</div>
<div class="t" style="left:2316.00px;top:1586.68px;font-size:23.3px;color:#ffffff;font-weight:bold;font-family:'Liberation Sans';">Spaces: 4</div>
<div class="t" style="left:2457.00px;top:1586.68px;font-size:23.3px;color:#ffffff;font-weight:bold;font-family:'Liberation Sans';">UTF-8</div>
<div class="t" style="left:2567.00px;top:1586.68px;font-size:23.3px;color:#ffffff;font-weight:bold;font-family:'Liberation Sans';">LF</div>
<div class="t" style="left:2616.40px;top:1587.52px;font-size:22.3px;color:#ffffff;font-weight:bold;font-family:'Liberation Sans';">SQL</div>
<div class="t" style="left:2683.50px;top:1587.35px;font-size:22.5px;color:#ffffff;font-weight:bold;font-family:'Liberation Sans';">MSSQL</div>
<svg style="left:2787.00px;top:1583.00px;" width="27" height="27" viewBox="0 0 27 27"><circle cx="13.4" cy="13" r="13" fill="#fff"/><ellipse cx="9.6" cy="9.2" rx="1.8" ry="2.2" fill="#0a70cd"/><ellipse cx="17.6" cy="9.2" rx="1.8" ry="2.2" fill="#0a70cd"/><path d="M5.5 17 Q13.4 25.5 21.4 17" fill="none" stroke="#0a70cd" stroke-width="2.6" stroke-linecap="round"/></svg>
<div class="t" style="left:2526.80px;top:1562.04px;font-size:34.8px;color:#999;font-weight:bold;font-family:'Liberation Sans';"><span style="color:rgba(110,190,100,0.55)">lime</span><span style="color:rgba(90,90,90,0.35)">download.com</span></div>
</body></html>
